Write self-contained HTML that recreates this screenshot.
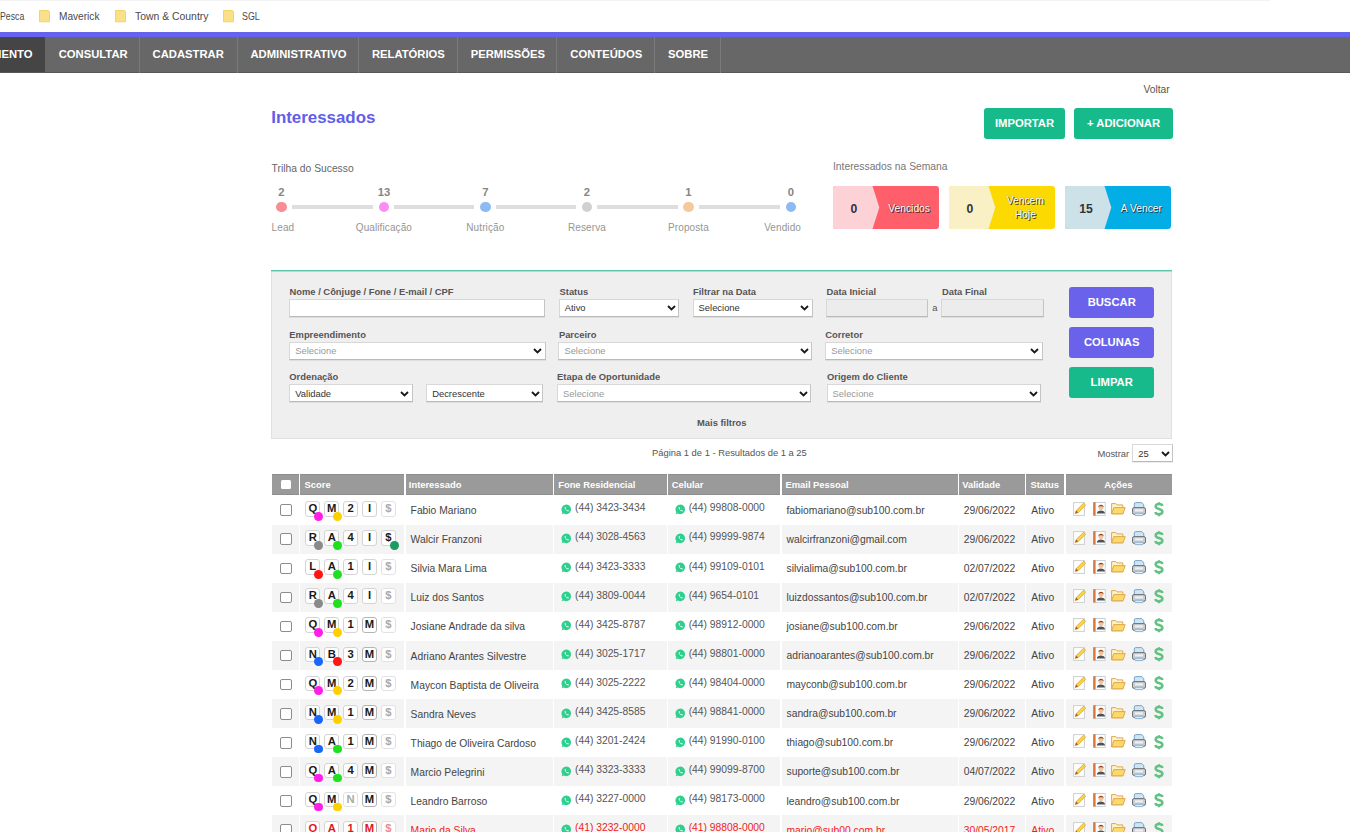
<!DOCTYPE html><html><head><meta charset="utf-8"><style>
html,body{margin:0;padding:0}
body{width:1350px;height:832px;overflow:hidden;position:relative;background:#fff;font-family:'Liberation Sans', sans-serif}
.t{position:absolute;line-height:1;white-space:nowrap}

</style></head><body>
<div style="position:absolute;left:0px;top:0px;width:1270.00px;height:1.00px;background:#f3f3f3"></div>
<div class="t" style="left:0px;top:11.32px;font-size:11.5px;color:#4a4a4a;font-weight:normal;transform:scaleX(0.76);transform-origin:0 0">Pesca</div>
<svg style="position:absolute;left:39px;top:10px" width="12" height="13" viewBox="0 0 12 13"><path d="M0.5 0.5 L9.5 0.5 L10.5 1.5 L10.5 11.8 L0.5 11.8 Z" fill="#fbe08a" stroke="#f0cc5a" stroke-width="0.8"/></svg>
<div class="t" style="left:59px;top:11.32px;font-size:11.5px;color:#4a4a4a;font-weight:normal;transform:scaleX(0.88);transform-origin:0 0">Maverick</div>
<svg style="position:absolute;left:114.5px;top:10px" width="12" height="13" viewBox="0 0 12 13"><path d="M0.5 0.5 L9.5 0.5 L10.5 1.5 L10.5 11.8 L0.5 11.8 Z" fill="#fbe08a" stroke="#f0cc5a" stroke-width="0.8"/></svg>
<div class="t" style="left:134.5px;top:11.32px;font-size:11.5px;color:#4a4a4a;font-weight:normal;transform:scaleX(0.905);transform-origin:0 0">Town &amp; Country</div>
<svg style="position:absolute;left:222.5px;top:10px" width="12" height="13" viewBox="0 0 12 13"><path d="M0.5 0.5 L9.5 0.5 L10.5 1.5 L10.5 11.8 L0.5 11.8 Z" fill="#fbe08a" stroke="#f0cc5a" stroke-width="0.8"/></svg>
<div class="t" style="left:241.5px;top:11.32px;font-size:11.5px;color:#4a4a4a;font-weight:normal;transform:scaleX(0.77);transform-origin:0 0">SGL</div>
<div style="position:absolute;left:0px;top:32px;width:1350.00px;height:5.00px;background:#6662f0"></div>
<div style="position:absolute;left:0px;top:37px;width:1350.00px;height:36.00px;background:#676767"></div>
<div style="position:absolute;left:0px;top:37px;width:45.00px;height:36.00px;background:#454545"></div>
<div style="position:absolute;left:0px;top:72px;width:1350.00px;height:1.00px;background:#585858"></div>
<div style="position:absolute;left:139.0px;top:37px;width:1.00px;height:36.00px;background:#7a7a7a"></div>
<div style="position:absolute;left:237.0px;top:37px;width:1.00px;height:36.00px;background:#7a7a7a"></div>
<div style="position:absolute;left:357.9px;top:37px;width:1.00px;height:36.00px;background:#7a7a7a"></div>
<div style="position:absolute;left:457.4px;top:37px;width:1.00px;height:36.00px;background:#7a7a7a"></div>
<div style="position:absolute;left:556.3px;top:37px;width:1.00px;height:36.00px;background:#7a7a7a"></div>
<div style="position:absolute;left:654.3px;top:37px;width:1.00px;height:36.00px;background:#7a7a7a"></div>
<div style="position:absolute;left:720.2px;top:37px;width:1.00px;height:36.00px;background:#7a7a7a"></div>
<div class="t" style="right:1317.5px;top:49.34px;font-size:11.25px;color:#fff;font-weight:bold;">ATENDIMENTO</div>
<div class="t" style="left:58.7px;top:49.34px;font-size:11.25px;color:#fff;font-weight:bold;">CONSULTAR</div>
<div class="t" style="left:152.6px;top:49.34px;font-size:11.25px;color:#fff;font-weight:bold;">CADASTRAR</div>
<div class="t" style="left:250.4px;top:49.34px;font-size:11.25px;color:#fff;font-weight:bold;">ADMINISTRATIVO</div>
<div class="t" style="left:371.9px;top:49.34px;font-size:11.25px;color:#fff;font-weight:bold;">RELATÓRIOS</div>
<div class="t" style="left:470.7px;top:49.34px;font-size:11.25px;color:#fff;font-weight:bold;">PERMISSÕES</div>
<div class="t" style="left:570.3px;top:49.34px;font-size:11.25px;color:#fff;font-weight:bold;">CONTEÚDOS</div>
<div class="t" style="left:668.0px;top:49.34px;font-size:11.25px;color:#fff;font-weight:bold;">SOBRE</div>
<div class="t" style="left:1143.4px;top:85.15px;font-size:10.3px;color:#555;font-weight:normal;">Voltar</div>
<div class="t" style="left:271.2px;top:109.74px;font-size:16.9px;color:#5f5fe8;font-weight:bold;">Interessados</div>
<div style="position:absolute;left:984px;top:108px;width:81.00px;height:31.00px;background:#17bb8b;border-radius:3px;color:#fff;font-weight:bold;font-size:11.25px;line-height:31.00px;text-align:center;white-space:nowrap">IMPORTAR</div>
<div style="position:absolute;left:1074px;top:108px;width:99.00px;height:31.00px;background:#17bb8b;border-radius:3px;color:#fff;font-weight:bold;font-size:11.25px;line-height:31.00px;text-align:center;white-space:nowrap">+ ADICIONAR</div>
<div class="t" style="left:271.6px;top:163.94px;font-size:10.3px;color:#666;font-weight:normal;">Trilha do Sucesso</div>
<div style="position:absolute;left:276.10px;top:201.50px;width:10.6px;height:10.6px;border-radius:50%;background:#f88d96"></div>
<div class="t" style="left:81.39999999999998px;width:400px;text-align:center;top:186.74px;font-size:11.25px;color:#858585;font-weight:bold;">2</div>
<div class="t" style="left:271.6px;top:223.40px;font-size:10px;color:#959595;font-weight:normal;letter-spacing:0.1px">Lead</div>
<div style="position:absolute;left:291.59999999999997px;top:205px;width:81.50px;height:3.60px;background:#dedede"></div>
<div style="position:absolute;left:378.60px;top:201.50px;width:10.6px;height:10.6px;border-radius:50%;background:#fb8df0"></div>
<div class="t" style="left:183.89999999999998px;width:400px;text-align:center;top:186.74px;font-size:11.25px;color:#858585;font-weight:bold;">13</div>
<div class="t" style="left:183.89999999999998px;width:400px;text-align:center;top:223.40px;font-size:10px;color:#959595;font-weight:normal;letter-spacing:0.1px">Qualificação</div>
<div style="position:absolute;left:394.09999999999997px;top:205px;width:80.40px;height:3.60px;background:#dedede"></div>
<div style="position:absolute;left:480.00px;top:201.50px;width:10.6px;height:10.6px;border-radius:50%;background:#8bbaf4"></div>
<div class="t" style="left:285.3px;width:400px;text-align:center;top:186.74px;font-size:11.25px;color:#858585;font-weight:bold;">7</div>
<div class="t" style="left:285.3px;width:400px;text-align:center;top:223.40px;font-size:10px;color:#959595;font-weight:normal;letter-spacing:0.1px">Nutrição</div>
<div style="position:absolute;left:495.5px;top:205px;width:80.70px;height:3.60px;background:#dedede"></div>
<div style="position:absolute;left:581.70px;top:201.50px;width:10.6px;height:10.6px;border-radius:50%;background:#d0d0d0"></div>
<div class="t" style="left:387px;width:400px;text-align:center;top:186.74px;font-size:11.25px;color:#858585;font-weight:bold;">2</div>
<div class="t" style="left:387px;width:400px;text-align:center;top:223.40px;font-size:10px;color:#959595;font-weight:normal;letter-spacing:0.1px">Reserva</div>
<div style="position:absolute;left:597.2px;top:205px;width:80.50px;height:3.60px;background:#dedede"></div>
<div style="position:absolute;left:683.20px;top:201.50px;width:10.6px;height:10.6px;border-radius:50%;background:#f6c99c"></div>
<div class="t" style="left:488.5px;width:400px;text-align:center;top:186.74px;font-size:11.25px;color:#858585;font-weight:bold;">1</div>
<div class="t" style="left:488.5px;width:400px;text-align:center;top:223.40px;font-size:10px;color:#959595;font-weight:normal;letter-spacing:0.1px">Proposta</div>
<div style="position:absolute;left:698.7px;top:205px;width:81.50px;height:3.60px;background:#dedede"></div>
<div style="position:absolute;left:785.70px;top:201.50px;width:10.6px;height:10.6px;border-radius:50%;background:#8bbaf4"></div>
<div class="t" style="left:591px;width:400px;text-align:center;top:186.74px;font-size:11.25px;color:#858585;font-weight:bold;">0</div>
<div class="t" style="right:549px;top:223.40px;font-size:10px;color:#959595;font-weight:normal;letter-spacing:0.1px">Vendido</div>
<div class="t" style="left:833px;top:162.14px;font-size:10.3px;color:#777;font-weight:normal;">Interessados na Semana</div>
<div style="position:absolute;left:833px;top:186px;width:106.2px;height:43px;border-radius:3px;overflow:hidden;background:#ff5e6b"><svg style="position:absolute;left:0;top:0" width="50" height="43"><path d="M0 0 L39.5 0 L46.3 21.5 L39.5 43 L0 43 Z" fill="#fdd2d6"/></svg><div style="position:absolute;left:0.8px;width:40px;top:2px;height:43px;line-height:43px;text-align:center;font-size:12.2px;font-weight:bold;color:#333">0</div><div style="position:absolute;left:46px;right:0;top:1.3px;line-height:43px;text-align:center;font-size:10.3px;color:#fff;text-shadow:1px 1px 0.6px rgba(30,30,30,0.85), 0 0 1px rgba(40,40,40,0.5)">Vencidos</div></div>
<div style="position:absolute;left:949.2px;top:186px;width:106.2px;height:43px;border-radius:3px;overflow:hidden;background:#fcd900"><svg style="position:absolute;left:0;top:0" width="50" height="43"><path d="M0 0 L39.5 0 L46.3 21.5 L39.5 43 L0 43 Z" fill="#faf0c6"/></svg><div style="position:absolute;left:0.8px;width:40px;top:2px;height:43px;line-height:43px;text-align:center;font-size:12.2px;font-weight:bold;color:#333">0</div><div style="position:absolute;left:46px;right:0;top:8.4px;line-height:14.0px;text-align:center;font-size:10.3px;color:#fff;text-shadow:1px 1px 0.6px rgba(30,30,30,0.85), 0 0 1px rgba(40,40,40,0.5)">Vencem<br>Hoje</div></div>
<div style="position:absolute;left:1065.3px;top:186px;width:106.2px;height:43px;border-radius:3px;overflow:hidden;background:#03ade6"><svg style="position:absolute;left:0;top:0" width="50" height="43"><path d="M0 0 L39.5 0 L46.3 21.5 L39.5 43 L0 43 Z" fill="#cde2e8"/></svg><div style="position:absolute;left:0.8px;width:40px;top:2px;height:43px;line-height:43px;text-align:center;font-size:12.2px;font-weight:bold;color:#333">15</div><div style="position:absolute;left:46px;right:0;top:1.3px;line-height:43px;text-align:center;font-size:10.3px;color:#fff;text-shadow:1px 1px 0.6px rgba(30,30,30,0.85), 0 0 1px rgba(40,40,40,0.5)">A Vencer</div></div>
<div style="position:absolute;left:271px;top:270px;width:898.5px;height:166px;background:#efefef;border:1px solid #e0e0e0;border-top:2px solid #5dd5b6"></div>
<div style="position:absolute;left:271px;top:270px;width:901.00px;height:1.00px;background:#5cc6ac"></div>
<div style="position:absolute;left:271px;top:271px;width:901.00px;height:1.00px;background:#9fe6d2"></div>
<div class="t" style="left:289.5px;top:286.81px;font-size:9.4px;color:#555;font-weight:bold;">Nome / Cônjuge / Fone / E-mail / CPF</div>
<div class="t" style="left:559.5px;top:286.81px;font-size:9.4px;color:#555;font-weight:bold;">Status</div>
<div class="t" style="left:693px;top:286.81px;font-size:9.4px;color:#555;font-weight:bold;">Filtrar na Data</div>
<div class="t" style="left:826.5px;top:286.81px;font-size:9.4px;color:#555;font-weight:bold;">Data Inicial</div>
<div class="t" style="left:942px;top:286.81px;font-size:9.4px;color:#555;font-weight:bold;">Data Final</div>
<div style="position:absolute;left:289.2px;top:298.7px;width:253.60px;height:16.00px;background:#fff;border:1px solid #d8d8d8;border-bottom-color:#b9b9b9;border-right-color:#c4c4c4;box-shadow:0 1px 0 rgba(0,0,0,0.07)"></div>
<div style="position:absolute;left:558.7px;top:298.7px;width:118.60px;height:16.00px;background:#fff;border:1px solid #d8d8d8;border-bottom-color:#b9b9b9;border-right-color:#c4c4c4;box-shadow:0 1px 0 rgba(0,0,0,0.07)"></div>
<div class="t" style="left:564.7px;top:303.11px;font-size:9.4px;color:#333;font-weight:normal;">Ativo</div>
<svg style="position:absolute;left:666.8px;top:305.3px" width="9" height="6" viewBox="0 0 9 6"><path d="M1 1 L4.5 4.5 L8 1" fill="none" stroke="#1a1a1a" stroke-width="1.85"/></svg>
<div style="position:absolute;left:692.6px;top:298.7px;width:118.00px;height:16.00px;background:#fff;border:1px solid #d8d8d8;border-bottom-color:#b9b9b9;border-right-color:#c4c4c4;box-shadow:0 1px 0 rgba(0,0,0,0.07)"></div>
<div class="t" style="left:698.6px;top:303.11px;font-size:9.4px;color:#333;font-weight:normal;">Selecione</div>
<svg style="position:absolute;left:800.1px;top:305.3px" width="9" height="6" viewBox="0 0 9 6"><path d="M1 1 L4.5 4.5 L8 1" fill="none" stroke="#1a1a1a" stroke-width="1.85"/></svg>
<div style="position:absolute;left:826px;top:298.7px;width:100.30px;height:16.00px;background:#ececec;border:1px solid #d8d8d8;border-bottom-color:#b9b9b9;border-right-color:#c4c4c4;box-shadow:0 1px 0 rgba(0,0,0,0.07)"></div>
<div class="t" style="left:932.3px;top:302.51px;font-size:9.4px;color:#555;font-weight:normal;">a</div>
<div style="position:absolute;left:941.4px;top:298.7px;width:100.50px;height:16.00px;background:#ececec;border:1px solid #d8d8d8;border-bottom-color:#b9b9b9;border-right-color:#c4c4c4;box-shadow:0 1px 0 rgba(0,0,0,0.07)"></div>
<div class="t" style="left:289.3px;top:329.81px;font-size:9.4px;color:#555;font-weight:bold;">Empreendimento</div>
<div class="t" style="left:558.9px;top:329.81px;font-size:9.4px;color:#555;font-weight:bold;">Parceiro</div>
<div class="t" style="left:825.3px;top:329.81px;font-size:9.4px;color:#555;font-weight:bold;">Corretor</div>
<div style="position:absolute;left:289.3px;top:341.6px;width:254.30px;height:16.00px;background:#fff;border:1px solid #d8d8d8;border-bottom-color:#b9b9b9;border-right-color:#c4c4c4;box-shadow:0 1px 0 rgba(0,0,0,0.07)"></div>
<div class="t" style="left:295.3px;top:346.01px;font-size:9.4px;color:#999;font-weight:normal;">Selecione</div>
<svg style="position:absolute;left:533.1px;top:348.20000000000005px" width="9" height="6" viewBox="0 0 9 6"><path d="M1 1 L4.5 4.5 L8 1" fill="none" stroke="#1a1a1a" stroke-width="1.85"/></svg>
<div style="position:absolute;left:558.4px;top:341.6px;width:251.80px;height:16.00px;background:#fff;border:1px solid #d8d8d8;border-bottom-color:#b9b9b9;border-right-color:#c4c4c4;box-shadow:0 1px 0 rgba(0,0,0,0.07)"></div>
<div class="t" style="left:564.4px;top:346.01px;font-size:9.4px;color:#999;font-weight:normal;">Selecione</div>
<svg style="position:absolute;left:799.7px;top:348.20000000000005px" width="9" height="6" viewBox="0 0 9 6"><path d="M1 1 L4.5 4.5 L8 1" fill="none" stroke="#1a1a1a" stroke-width="1.85"/></svg>
<div style="position:absolute;left:825.3px;top:341.6px;width:215.30px;height:16.00px;background:#fff;border:1px solid #d8d8d8;border-bottom-color:#b9b9b9;border-right-color:#c4c4c4;box-shadow:0 1px 0 rgba(0,0,0,0.07)"></div>
<div class="t" style="left:831.3px;top:346.01px;font-size:9.4px;color:#999;font-weight:normal;">Selecione</div>
<svg style="position:absolute;left:1030.1px;top:348.20000000000005px" width="9" height="6" viewBox="0 0 9 6"><path d="M1 1 L4.5 4.5 L8 1" fill="none" stroke="#1a1a1a" stroke-width="1.85"/></svg>
<div class="t" style="left:289.3px;top:372.41px;font-size:9.4px;color:#555;font-weight:bold;">Ordenação</div>
<div class="t" style="left:557.1px;top:372.41px;font-size:9.4px;color:#555;font-weight:bold;">Etapa de Oportunidade</div>
<div class="t" style="left:827px;top:372.41px;font-size:9.4px;color:#555;font-weight:bold;">Origem do Cliente</div>
<div style="position:absolute;left:289.3px;top:384.4px;width:121.40px;height:15.80px;background:#fff;border:1px solid #d8d8d8;border-bottom-color:#b9b9b9;border-right-color:#c4c4c4;box-shadow:0 1px 0 rgba(0,0,0,0.07)"></div>
<div class="t" style="left:295.3px;top:388.71px;font-size:9.4px;color:#333;font-weight:normal;">Validade</div>
<svg style="position:absolute;left:400.2px;top:390.9px" width="9" height="6" viewBox="0 0 9 6"><path d="M1 1 L4.5 4.5 L8 1" fill="none" stroke="#1a1a1a" stroke-width="1.85"/></svg>
<div style="position:absolute;left:426.2px;top:384.4px;width:115.10px;height:15.80px;background:#fff;border:1px solid #d8d8d8;border-bottom-color:#b9b9b9;border-right-color:#c4c4c4;box-shadow:0 1px 0 rgba(0,0,0,0.07)"></div>
<div class="t" style="left:432.2px;top:388.71px;font-size:9.4px;color:#333;font-weight:normal;">Decrescente</div>
<svg style="position:absolute;left:530.8px;top:390.9px" width="9" height="6" viewBox="0 0 9 6"><path d="M1 1 L4.5 4.5 L8 1" fill="none" stroke="#1a1a1a" stroke-width="1.85"/></svg>
<div style="position:absolute;left:557.1px;top:384.4px;width:252.00px;height:15.80px;background:#fff;border:1px solid #d8d8d8;border-bottom-color:#b9b9b9;border-right-color:#c4c4c4;box-shadow:0 1px 0 rgba(0,0,0,0.07)"></div>
<div class="t" style="left:563.1px;top:388.71px;font-size:9.4px;color:#999;font-weight:normal;">Selecione</div>
<svg style="position:absolute;left:798.6px;top:390.9px" width="9" height="6" viewBox="0 0 9 6"><path d="M1 1 L4.5 4.5 L8 1" fill="none" stroke="#1a1a1a" stroke-width="1.85"/></svg>
<div style="position:absolute;left:826.6px;top:384.4px;width:212.90px;height:15.80px;background:#fff;border:1px solid #d8d8d8;border-bottom-color:#b9b9b9;border-right-color:#c4c4c4;box-shadow:0 1px 0 rgba(0,0,0,0.07)"></div>
<div class="t" style="left:832.6px;top:388.71px;font-size:9.4px;color:#999;font-weight:normal;">Selecione</div>
<svg style="position:absolute;left:1029.0px;top:390.9px" width="9" height="6" viewBox="0 0 9 6"><path d="M1 1 L4.5 4.5 L8 1" fill="none" stroke="#1a1a1a" stroke-width="1.85"/></svg>
<div class="t" style="left:697px;top:418.21px;font-size:9.4px;color:#555;font-weight:bold;">Mais filtros</div>
<div style="position:absolute;left:1069px;top:286.5px;width:85.40px;height:31.10px;background:#6a62ea;border-radius:3px;color:#fff;font-weight:bold;font-size:11.25px;line-height:31.10px;text-align:center;white-space:nowrap">BUSCAR</div>
<div style="position:absolute;left:1069px;top:327px;width:85.40px;height:31.00px;background:#6a62ea;border-radius:3px;color:#fff;font-weight:bold;font-size:11.25px;line-height:31.00px;text-align:center;white-space:nowrap">COLUNAS</div>
<div style="position:absolute;left:1069px;top:367px;width:85.40px;height:31.30px;background:#17bb8b;border-radius:3px;color:#fff;font-weight:bold;font-size:11.25px;line-height:31.30px;text-align:center;white-space:nowrap">LIMPAR</div>
<div class="t" style="left:652px;top:448.41px;font-size:9.4px;color:#555;font-weight:normal;">Página 1 de 1 - Resultados de 1 a 25</div>
<div class="t" style="left:1097.4px;top:448.51px;font-size:9.4px;color:#555;font-weight:normal;">Mostrar</div>
<div style="position:absolute;left:1132.3px;top:444.2px;width:39.00px;height:16.00px;background:#fff;border:1px solid #d8d8d8;border-bottom-color:#b9b9b9;border-right-color:#c4c4c4;box-shadow:0 1px 0 rgba(0,0,0,0.07)"></div>
<div class="t" style="left:1138.3px;top:448.61px;font-size:9.4px;color:#333;font-weight:normal;">25</div>
<svg style="position:absolute;left:1160.8px;top:450.8px" width="9" height="6" viewBox="0 0 9 6"><path d="M1 1 L4.5 4.5 L8 1" fill="none" stroke="#1a1a1a" stroke-width="1.85"/></svg>
<div style="position:absolute;left:272px;top:474px;width:900.00px;height:21.00px;background:#9a9a9a;border-top:1px solid #8e8e8e;border-bottom:1px solid #8e8e8e;box-sizing:border-box"></div>
<div style="position:absolute;left:272px;top:524.6800000000001px;width:900.00px;height:29.08px;background:#f4f4f4"></div>
<div style="position:absolute;left:272px;top:582.84px;width:900.00px;height:29.08px;background:#f4f4f4"></div>
<div style="position:absolute;left:272px;top:641.0px;width:900.00px;height:29.08px;background:#f4f4f4"></div>
<div style="position:absolute;left:272px;top:699.1600000000001px;width:900.00px;height:29.08px;background:#f4f4f4"></div>
<div style="position:absolute;left:272px;top:757.3199999999999px;width:900.00px;height:29.08px;background:#f4f4f4"></div>
<div style="position:absolute;left:272px;top:815.48px;width:900.00px;height:16.52px;background:#f4f4f4"></div>
<div style="position:absolute;left:298.8px;top:474px;width:1.70px;height:358.00px;background:#fff"></div>
<div style="position:absolute;left:404.3px;top:474px;width:1.30px;height:358.00px;background:#fff"></div>
<div style="position:absolute;left:553.2px;top:474px;width:1.30px;height:358.00px;background:#fff"></div>
<div style="position:absolute;left:666.5px;top:474px;width:1.30px;height:358.00px;background:#fff"></div>
<div style="position:absolute;left:780.2px;top:474px;width:1.50px;height:358.00px;background:#fff"></div>
<div style="position:absolute;left:957.8px;top:474px;width:1.20px;height:358.00px;background:#fff"></div>
<div style="position:absolute;left:1025.1px;top:474px;width:1.40px;height:358.00px;background:#fff"></div>
<div style="position:absolute;left:1064.4px;top:474px;width:1.60px;height:358.00px;background:#fff"></div>
<div class="t" style="left:304.6px;top:480.31px;font-size:9.4px;color:#fff;font-weight:bold;">Score</div>
<div class="t" style="left:408.8px;top:480.31px;font-size:9.4px;color:#fff;font-weight:bold;">Interessado</div>
<div class="t" style="left:558.2px;top:480.31px;font-size:9.4px;color:#fff;font-weight:bold;">Fone Residencial</div>
<div class="t" style="left:671.7px;top:480.31px;font-size:9.4px;color:#fff;font-weight:bold;">Celular</div>
<div class="t" style="left:785.5px;top:480.31px;font-size:9.4px;color:#fff;font-weight:bold;">Email Pessoal</div>
<div class="t" style="left:962.2px;top:480.31px;font-size:9.4px;color:#fff;font-weight:bold;">Validade</div>
<div class="t" style="left:1030.4px;top:480.31px;font-size:9.4px;color:#fff;font-weight:bold;">Status</div>
<div class="t" style="left:918.4000000000001px;width:400px;text-align:center;top:480.31px;font-size:9.4px;color:#fff;font-weight:bold;">Ações</div>
<div style="position:absolute;left:281px;top:479.8px;width:10.00px;height:9.40px;background:#fff;border-radius:1.5px"></div>
<div style="position:absolute;left:280.3px;top:504.40px;width:9.6px;height:9.6px;border:1.2px solid #8c8c8c;border-radius:2px;background:#fff"></div>
<div style="position:absolute;left:305.20px;top:501.10px;width:13.2px;height:13.6px;border:1px solid #d4d4d4;border-radius:3px;background:#fff;text-align:center;font-size:11.25px;line-height:12.6px;font-weight:bold;color:#1a1a1a">Q</div>
<div style="position:absolute;left:314.40px;top:511.90px;width:8.8px;height:8.8px;border-radius:50%;background:#ff1ee8"></div>
<div style="position:absolute;left:324.10px;top:501.10px;width:13.2px;height:13.6px;border:1px solid #d4d4d4;border-radius:3px;background:#fff;text-align:center;font-size:11.25px;line-height:12.6px;font-weight:bold;color:#1a1a1a">M</div>
<div style="position:absolute;left:333.30px;top:511.90px;width:8.8px;height:8.8px;border-radius:50%;background:#ffd000"></div>
<div style="position:absolute;left:343.00px;top:501.10px;width:13.2px;height:13.6px;border:1px solid #d4d4d4;border-radius:3px;background:#fff;text-align:center;font-size:11.25px;line-height:12.6px;font-weight:bold;color:#1a1a1a">2</div>
<div style="position:absolute;left:361.90px;top:501.10px;width:13.2px;height:13.6px;border:1px solid #d4d4d4;border-radius:3px;background:#fff;text-align:center;font-size:11.25px;line-height:12.6px;font-weight:bold;color:#1a1a1a">I</div>
<div style="position:absolute;left:380.80px;top:501.10px;width:13.2px;height:13.6px;border:1px solid #e2e2e2;border-radius:3px;background:#fff;text-align:center;font-size:11.25px;line-height:12.6px;font-weight:bold;color:#aaa">$</div>
<div class="t" style="left:410.6px;top:506.15px;font-size:10.3px;color:#444;font-weight:normal;">Fabio Mariano</div>
<svg style="position:absolute;left:561.00px;top:504.00px" width="11" height="11" viewBox="0 0 11 11"><path d="M5.5 0.6 A4.8 4.8 0 1 1 2.9 9.6 L0.7 10.3 L1.4 8.2 A4.8 4.8 0 0 1 5.5 0.6 Z" fill="#2fcf8e"/><path d="M3.6 3.2 C3.4 4.6 5.3 7.2 7.4 7.4 L7.9 6.7 L6.8 6.1 L6.3 6.6 C5.6 6.3 4.8 5.5 4.5 4.8 L5 4.3 L4.4 3.1 Z" fill="#fff"/></svg>
<div class="t" style="left:575px;top:503.35px;font-size:10.3px;color:#555;font-weight:normal;">(44) 3423-3434</div>
<svg style="position:absolute;left:674.60px;top:504.00px" width="11" height="11" viewBox="0 0 11 11"><path d="M5.5 0.6 A4.8 4.8 0 1 1 2.9 9.6 L0.7 10.3 L1.4 8.2 A4.8 4.8 0 0 1 5.5 0.6 Z" fill="#2fcf8e"/><path d="M3.6 3.2 C3.4 4.6 5.3 7.2 7.4 7.4 L7.9 6.7 L6.8 6.1 L6.3 6.6 C5.6 6.3 4.8 5.5 4.5 4.8 L5 4.3 L4.4 3.1 Z" fill="#fff"/></svg>
<div class="t" style="left:688.7px;top:503.35px;font-size:10.3px;color:#555;font-weight:normal;">(44) 99808-0000</div>
<div class="t" style="left:786.5px;top:505.75px;font-size:10.3px;color:#444;font-weight:normal;">fabiomariano@sub100.com.br</div>
<div class="t" style="left:963.7px;top:505.75px;font-size:10.3px;color:#444;font-weight:normal;">29/06/2022</div>
<div class="t" style="left:1031.3px;top:505.75px;font-size:10.3px;color:#444;font-weight:normal;">Ativo</div>
<svg style="position:absolute;left:1073px;top:501.70px" width="15" height="15" viewBox="0 0 15 15"><rect x="0.6" y="0.6" width="10.8" height="12.8" fill="#fff" stroke="#cfcfcf" stroke-width="1"/><path d="M2.2 11.6 L3.2 8.6 L10.6 1.2 L12.6 3.2 L5.2 10.6 Z" fill="#f9d648" stroke="#dca32a" stroke-width="0.8"/><path d="M2.2 11.6 L3.2 8.6 L5.2 10.6 Z" fill="#a8582c"/></svg>
<svg style="position:absolute;left:1093.2px;top:501.70px" width="13" height="15" viewBox="0 0 13 15"><rect x="1" y="0.5" width="11.2" height="12.9" fill="#fff" stroke="#c3cdd6" stroke-width="0.9"/><rect x="0.2" y="0.2" width="2.4" height="13.4" fill="#d9773c"/><path d="M3.8 11.6 C3.6 7.4 12.2 7.4 12 11.6 Z" fill="#4f5358"/><circle cx="8" cy="5.4" r="2.5" fill="#efc39a"/><path d="M5.3 5.3 C5 1.9 11 1.9 10.7 5.3 C10 4 6 4 5.3 5.3 Z" fill="#9c4418"/></svg>
<svg style="position:absolute;left:1111px;top:503.20px" width="15" height="12" viewBox="0 0 15 12"><path d="M0.6 0.6 L4.8 0.6 L6 1.9 L11.8 1.9 L11.8 10.8 L0.6 10.8 Z" fill="#fdf2c8" stroke="#e0a850" stroke-width="1"/><path d="M2.8 4.6 L14.2 4.6 L12 10.8 L0.6 10.8 Z" fill="#fbd96a" stroke="#e0a850" stroke-width="1"/></svg>
<svg style="position:absolute;left:1132px;top:501.70px" width="15" height="15" viewBox="0 0 15 15"><path d="M2.3 6.5 L2.3 2 Q2.3 0.6 3.7 0.6 L9.8 0.6 L11.8 2.8 L11.8 6.5 Z" fill="#cde6f6" stroke="#6f9cbf" stroke-width="0.9"/><rect x="0.5" y="5.6" width="13" height="6.8" rx="1.6" fill="#c9cdd0" stroke="#5d6368" stroke-width="0.9"/><rect x="3" y="7.3" width="8" height="2.2" fill="#eef0f2"/><rect x="2.8" y="11.2" width="8.4" height="2.4" rx="0.6" fill="#dcecf7" stroke="#7aa2c2" stroke-width="0.8"/></svg>
<svg style="position:absolute;left:1153.5px;top:501.90px" width="10" height="15" viewBox="0 0 10 15"><path d="M8.4 4 C8.1 2.6 6.9 2.1 5 2.1 C3 2.1 1.7 3 1.7 4.4 C1.7 6 3.2 6.5 5 7 C6.9 7.5 8.4 8 8.4 9.8 C8.4 11.3 7 12.2 5 12.2 C3 12.2 1.7 11.5 1.4 10" fill="none" stroke="#63c283" stroke-width="2.5"/><path d="M5 0.2 L5 2.6 M5 11.8 L5 14.2" stroke="#63c283" stroke-width="2.2"/></svg>
<div style="position:absolute;left:280.3px;top:533.48px;width:9.6px;height:9.6px;border:1.2px solid #8c8c8c;border-radius:2px;background:#fff"></div>
<div style="position:absolute;left:305.20px;top:530.18px;width:13.2px;height:13.6px;border:1px solid #d4d4d4;border-radius:3px;background:#fff;text-align:center;font-size:11.25px;line-height:12.6px;font-weight:bold;color:#1a1a1a">R</div>
<div style="position:absolute;left:314.40px;top:540.98px;width:8.8px;height:8.8px;border-radius:50%;background:#8a8a8a"></div>
<div style="position:absolute;left:324.10px;top:530.18px;width:13.2px;height:13.6px;border:1px solid #d4d4d4;border-radius:3px;background:#fff;text-align:center;font-size:11.25px;line-height:12.6px;font-weight:bold;color:#1a1a1a">A</div>
<div style="position:absolute;left:333.30px;top:540.98px;width:8.8px;height:8.8px;border-radius:50%;background:#1ee01e"></div>
<div style="position:absolute;left:343.00px;top:530.18px;width:13.2px;height:13.6px;border:1px solid #d4d4d4;border-radius:3px;background:#fff;text-align:center;font-size:11.25px;line-height:12.6px;font-weight:bold;color:#1a1a1a">4</div>
<div style="position:absolute;left:361.90px;top:530.18px;width:13.2px;height:13.6px;border:1px solid #d4d4d4;border-radius:3px;background:#fff;text-align:center;font-size:11.25px;line-height:12.6px;font-weight:bold;color:#1a1a1a">I</div>
<div style="position:absolute;left:380.80px;top:530.18px;width:13.2px;height:13.6px;border:1px solid #d4d4d4;border-radius:3px;background:#fff;text-align:center;font-size:11.25px;line-height:12.6px;font-weight:bold;color:#1a1a1a">$</div>
<div style="position:absolute;left:390.00px;top:540.98px;width:8.8px;height:8.8px;border-radius:50%;background:#1e9a62"></div>
<div class="t" style="left:410.6px;top:535.23px;font-size:10.3px;color:#444;font-weight:normal;">Walcir Franzoni</div>
<svg style="position:absolute;left:561.00px;top:533.08px" width="11" height="11" viewBox="0 0 11 11"><path d="M5.5 0.6 A4.8 4.8 0 1 1 2.9 9.6 L0.7 10.3 L1.4 8.2 A4.8 4.8 0 0 1 5.5 0.6 Z" fill="#2fcf8e"/><path d="M3.6 3.2 C3.4 4.6 5.3 7.2 7.4 7.4 L7.9 6.7 L6.8 6.1 L6.3 6.6 C5.6 6.3 4.8 5.5 4.5 4.8 L5 4.3 L4.4 3.1 Z" fill="#fff"/></svg>
<div class="t" style="left:575px;top:532.43px;font-size:10.3px;color:#555;font-weight:normal;">(44) 3028-4563</div>
<svg style="position:absolute;left:674.60px;top:533.08px" width="11" height="11" viewBox="0 0 11 11"><path d="M5.5 0.6 A4.8 4.8 0 1 1 2.9 9.6 L0.7 10.3 L1.4 8.2 A4.8 4.8 0 0 1 5.5 0.6 Z" fill="#2fcf8e"/><path d="M3.6 3.2 C3.4 4.6 5.3 7.2 7.4 7.4 L7.9 6.7 L6.8 6.1 L6.3 6.6 C5.6 6.3 4.8 5.5 4.5 4.8 L5 4.3 L4.4 3.1 Z" fill="#fff"/></svg>
<div class="t" style="left:688.7px;top:532.43px;font-size:10.3px;color:#555;font-weight:normal;">(44) 99999-9874</div>
<div class="t" style="left:786.5px;top:534.83px;font-size:10.3px;color:#444;font-weight:normal;">walcirfranzoni@gmail.com</div>
<div class="t" style="left:963.7px;top:534.83px;font-size:10.3px;color:#444;font-weight:normal;">29/06/2022</div>
<div class="t" style="left:1031.3px;top:534.83px;font-size:10.3px;color:#444;font-weight:normal;">Ativo</div>
<svg style="position:absolute;left:1073px;top:530.78px" width="15" height="15" viewBox="0 0 15 15"><rect x="0.6" y="0.6" width="10.8" height="12.8" fill="#fff" stroke="#cfcfcf" stroke-width="1"/><path d="M2.2 11.6 L3.2 8.6 L10.6 1.2 L12.6 3.2 L5.2 10.6 Z" fill="#f9d648" stroke="#dca32a" stroke-width="0.8"/><path d="M2.2 11.6 L3.2 8.6 L5.2 10.6 Z" fill="#a8582c"/></svg>
<svg style="position:absolute;left:1093.2px;top:530.78px" width="13" height="15" viewBox="0 0 13 15"><rect x="1" y="0.5" width="11.2" height="12.9" fill="#fff" stroke="#c3cdd6" stroke-width="0.9"/><rect x="0.2" y="0.2" width="2.4" height="13.4" fill="#d9773c"/><path d="M3.8 11.6 C3.6 7.4 12.2 7.4 12 11.6 Z" fill="#4f5358"/><circle cx="8" cy="5.4" r="2.5" fill="#efc39a"/><path d="M5.3 5.3 C5 1.9 11 1.9 10.7 5.3 C10 4 6 4 5.3 5.3 Z" fill="#9c4418"/></svg>
<svg style="position:absolute;left:1111px;top:532.28px" width="15" height="12" viewBox="0 0 15 12"><path d="M0.6 0.6 L4.8 0.6 L6 1.9 L11.8 1.9 L11.8 10.8 L0.6 10.8 Z" fill="#fdf2c8" stroke="#e0a850" stroke-width="1"/><path d="M2.8 4.6 L14.2 4.6 L12 10.8 L0.6 10.8 Z" fill="#fbd96a" stroke="#e0a850" stroke-width="1"/></svg>
<svg style="position:absolute;left:1132px;top:530.78px" width="15" height="15" viewBox="0 0 15 15"><path d="M2.3 6.5 L2.3 2 Q2.3 0.6 3.7 0.6 L9.8 0.6 L11.8 2.8 L11.8 6.5 Z" fill="#cde6f6" stroke="#6f9cbf" stroke-width="0.9"/><rect x="0.5" y="5.6" width="13" height="6.8" rx="1.6" fill="#c9cdd0" stroke="#5d6368" stroke-width="0.9"/><rect x="3" y="7.3" width="8" height="2.2" fill="#eef0f2"/><rect x="2.8" y="11.2" width="8.4" height="2.4" rx="0.6" fill="#dcecf7" stroke="#7aa2c2" stroke-width="0.8"/></svg>
<svg style="position:absolute;left:1153.5px;top:530.98px" width="10" height="15" viewBox="0 0 10 15"><path d="M8.4 4 C8.1 2.6 6.9 2.1 5 2.1 C3 2.1 1.7 3 1.7 4.4 C1.7 6 3.2 6.5 5 7 C6.9 7.5 8.4 8 8.4 9.8 C8.4 11.3 7 12.2 5 12.2 C3 12.2 1.7 11.5 1.4 10" fill="none" stroke="#63c283" stroke-width="2.5"/><path d="M5 0.2 L5 2.6 M5 11.8 L5 14.2" stroke="#63c283" stroke-width="2.2"/></svg>
<div style="position:absolute;left:280.3px;top:562.56px;width:9.6px;height:9.6px;border:1.2px solid #8c8c8c;border-radius:2px;background:#fff"></div>
<div style="position:absolute;left:305.20px;top:559.26px;width:13.2px;height:13.6px;border:1px solid #d4d4d4;border-radius:3px;background:#fff;text-align:center;font-size:11.25px;line-height:12.6px;font-weight:bold;color:#1a1a1a">L</div>
<div style="position:absolute;left:314.40px;top:570.06px;width:8.8px;height:8.8px;border-radius:50%;background:#ff1414"></div>
<div style="position:absolute;left:324.10px;top:559.26px;width:13.2px;height:13.6px;border:1px solid #d4d4d4;border-radius:3px;background:#fff;text-align:center;font-size:11.25px;line-height:12.6px;font-weight:bold;color:#1a1a1a">A</div>
<div style="position:absolute;left:333.30px;top:570.06px;width:8.8px;height:8.8px;border-radius:50%;background:#1ee01e"></div>
<div style="position:absolute;left:343.00px;top:559.26px;width:13.2px;height:13.6px;border:1px solid #d4d4d4;border-radius:3px;background:#fff;text-align:center;font-size:11.25px;line-height:12.6px;font-weight:bold;color:#1a1a1a">1</div>
<div style="position:absolute;left:361.90px;top:559.26px;width:13.2px;height:13.6px;border:1px solid #d4d4d4;border-radius:3px;background:#fff;text-align:center;font-size:11.25px;line-height:12.6px;font-weight:bold;color:#1a1a1a">I</div>
<div style="position:absolute;left:380.80px;top:559.26px;width:13.2px;height:13.6px;border:1px solid #e2e2e2;border-radius:3px;background:#fff;text-align:center;font-size:11.25px;line-height:12.6px;font-weight:bold;color:#aaa">$</div>
<div class="t" style="left:410.6px;top:564.31px;font-size:10.3px;color:#444;font-weight:normal;">Silvia Mara Lima</div>
<svg style="position:absolute;left:561.00px;top:562.16px" width="11" height="11" viewBox="0 0 11 11"><path d="M5.5 0.6 A4.8 4.8 0 1 1 2.9 9.6 L0.7 10.3 L1.4 8.2 A4.8 4.8 0 0 1 5.5 0.6 Z" fill="#2fcf8e"/><path d="M3.6 3.2 C3.4 4.6 5.3 7.2 7.4 7.4 L7.9 6.7 L6.8 6.1 L6.3 6.6 C5.6 6.3 4.8 5.5 4.5 4.8 L5 4.3 L4.4 3.1 Z" fill="#fff"/></svg>
<div class="t" style="left:575px;top:561.50px;font-size:10.3px;color:#555;font-weight:normal;">(44) 3423-3333</div>
<svg style="position:absolute;left:674.60px;top:562.16px" width="11" height="11" viewBox="0 0 11 11"><path d="M5.5 0.6 A4.8 4.8 0 1 1 2.9 9.6 L0.7 10.3 L1.4 8.2 A4.8 4.8 0 0 1 5.5 0.6 Z" fill="#2fcf8e"/><path d="M3.6 3.2 C3.4 4.6 5.3 7.2 7.4 7.4 L7.9 6.7 L6.8 6.1 L6.3 6.6 C5.6 6.3 4.8 5.5 4.5 4.8 L5 4.3 L4.4 3.1 Z" fill="#fff"/></svg>
<div class="t" style="left:688.7px;top:561.50px;font-size:10.3px;color:#555;font-weight:normal;">(44) 99109-0101</div>
<div class="t" style="left:786.5px;top:563.91px;font-size:10.3px;color:#444;font-weight:normal;">silvialima@sub100.com.br</div>
<div class="t" style="left:963.7px;top:563.91px;font-size:10.3px;color:#444;font-weight:normal;">02/07/2022</div>
<div class="t" style="left:1031.3px;top:563.91px;font-size:10.3px;color:#444;font-weight:normal;">Ativo</div>
<svg style="position:absolute;left:1073px;top:559.86px" width="15" height="15" viewBox="0 0 15 15"><rect x="0.6" y="0.6" width="10.8" height="12.8" fill="#fff" stroke="#cfcfcf" stroke-width="1"/><path d="M2.2 11.6 L3.2 8.6 L10.6 1.2 L12.6 3.2 L5.2 10.6 Z" fill="#f9d648" stroke="#dca32a" stroke-width="0.8"/><path d="M2.2 11.6 L3.2 8.6 L5.2 10.6 Z" fill="#a8582c"/></svg>
<svg style="position:absolute;left:1093.2px;top:559.86px" width="13" height="15" viewBox="0 0 13 15"><rect x="1" y="0.5" width="11.2" height="12.9" fill="#fff" stroke="#c3cdd6" stroke-width="0.9"/><rect x="0.2" y="0.2" width="2.4" height="13.4" fill="#d9773c"/><path d="M3.8 11.6 C3.6 7.4 12.2 7.4 12 11.6 Z" fill="#4f5358"/><circle cx="8" cy="5.4" r="2.5" fill="#efc39a"/><path d="M5.3 5.3 C5 1.9 11 1.9 10.7 5.3 C10 4 6 4 5.3 5.3 Z" fill="#9c4418"/></svg>
<svg style="position:absolute;left:1111px;top:561.36px" width="15" height="12" viewBox="0 0 15 12"><path d="M0.6 0.6 L4.8 0.6 L6 1.9 L11.8 1.9 L11.8 10.8 L0.6 10.8 Z" fill="#fdf2c8" stroke="#e0a850" stroke-width="1"/><path d="M2.8 4.6 L14.2 4.6 L12 10.8 L0.6 10.8 Z" fill="#fbd96a" stroke="#e0a850" stroke-width="1"/></svg>
<svg style="position:absolute;left:1132px;top:559.86px" width="15" height="15" viewBox="0 0 15 15"><path d="M2.3 6.5 L2.3 2 Q2.3 0.6 3.7 0.6 L9.8 0.6 L11.8 2.8 L11.8 6.5 Z" fill="#cde6f6" stroke="#6f9cbf" stroke-width="0.9"/><rect x="0.5" y="5.6" width="13" height="6.8" rx="1.6" fill="#c9cdd0" stroke="#5d6368" stroke-width="0.9"/><rect x="3" y="7.3" width="8" height="2.2" fill="#eef0f2"/><rect x="2.8" y="11.2" width="8.4" height="2.4" rx="0.6" fill="#dcecf7" stroke="#7aa2c2" stroke-width="0.8"/></svg>
<svg style="position:absolute;left:1153.5px;top:560.06px" width="10" height="15" viewBox="0 0 10 15"><path d="M8.4 4 C8.1 2.6 6.9 2.1 5 2.1 C3 2.1 1.7 3 1.7 4.4 C1.7 6 3.2 6.5 5 7 C6.9 7.5 8.4 8 8.4 9.8 C8.4 11.3 7 12.2 5 12.2 C3 12.2 1.7 11.5 1.4 10" fill="none" stroke="#63c283" stroke-width="2.5"/><path d="M5 0.2 L5 2.6 M5 11.8 L5 14.2" stroke="#63c283" stroke-width="2.2"/></svg>
<div style="position:absolute;left:280.3px;top:591.64px;width:9.6px;height:9.6px;border:1.2px solid #8c8c8c;border-radius:2px;background:#fff"></div>
<div style="position:absolute;left:305.20px;top:588.34px;width:13.2px;height:13.6px;border:1px solid #d4d4d4;border-radius:3px;background:#fff;text-align:center;font-size:11.25px;line-height:12.6px;font-weight:bold;color:#1a1a1a">R</div>
<div style="position:absolute;left:314.40px;top:599.14px;width:8.8px;height:8.8px;border-radius:50%;background:#8a8a8a"></div>
<div style="position:absolute;left:324.10px;top:588.34px;width:13.2px;height:13.6px;border:1px solid #d4d4d4;border-radius:3px;background:#fff;text-align:center;font-size:11.25px;line-height:12.6px;font-weight:bold;color:#1a1a1a">A</div>
<div style="position:absolute;left:333.30px;top:599.14px;width:8.8px;height:8.8px;border-radius:50%;background:#1ee01e"></div>
<div style="position:absolute;left:343.00px;top:588.34px;width:13.2px;height:13.6px;border:1px solid #d4d4d4;border-radius:3px;background:#fff;text-align:center;font-size:11.25px;line-height:12.6px;font-weight:bold;color:#1a1a1a">4</div>
<div style="position:absolute;left:361.90px;top:588.34px;width:13.2px;height:13.6px;border:1px solid #d4d4d4;border-radius:3px;background:#fff;text-align:center;font-size:11.25px;line-height:12.6px;font-weight:bold;color:#1a1a1a">I</div>
<div style="position:absolute;left:380.80px;top:588.34px;width:13.2px;height:13.6px;border:1px solid #e2e2e2;border-radius:3px;background:#fff;text-align:center;font-size:11.25px;line-height:12.6px;font-weight:bold;color:#aaa">$</div>
<div class="t" style="left:410.6px;top:593.39px;font-size:10.3px;color:#444;font-weight:normal;">Luiz dos Santos</div>
<svg style="position:absolute;left:561.00px;top:591.24px" width="11" height="11" viewBox="0 0 11 11"><path d="M5.5 0.6 A4.8 4.8 0 1 1 2.9 9.6 L0.7 10.3 L1.4 8.2 A4.8 4.8 0 0 1 5.5 0.6 Z" fill="#2fcf8e"/><path d="M3.6 3.2 C3.4 4.6 5.3 7.2 7.4 7.4 L7.9 6.7 L6.8 6.1 L6.3 6.6 C5.6 6.3 4.8 5.5 4.5 4.8 L5 4.3 L4.4 3.1 Z" fill="#fff"/></svg>
<div class="t" style="left:575px;top:590.59px;font-size:10.3px;color:#555;font-weight:normal;">(44) 3809-0044</div>
<svg style="position:absolute;left:674.60px;top:591.24px" width="11" height="11" viewBox="0 0 11 11"><path d="M5.5 0.6 A4.8 4.8 0 1 1 2.9 9.6 L0.7 10.3 L1.4 8.2 A4.8 4.8 0 0 1 5.5 0.6 Z" fill="#2fcf8e"/><path d="M3.6 3.2 C3.4 4.6 5.3 7.2 7.4 7.4 L7.9 6.7 L6.8 6.1 L6.3 6.6 C5.6 6.3 4.8 5.5 4.5 4.8 L5 4.3 L4.4 3.1 Z" fill="#fff"/></svg>
<div class="t" style="left:688.7px;top:590.59px;font-size:10.3px;color:#555;font-weight:normal;">(44) 9654-0101</div>
<div class="t" style="left:786.5px;top:592.99px;font-size:10.3px;color:#444;font-weight:normal;">luizdossantos@sub100.com.br</div>
<div class="t" style="left:963.7px;top:592.99px;font-size:10.3px;color:#444;font-weight:normal;">02/07/2022</div>
<div class="t" style="left:1031.3px;top:592.99px;font-size:10.3px;color:#444;font-weight:normal;">Ativo</div>
<svg style="position:absolute;left:1073px;top:588.94px" width="15" height="15" viewBox="0 0 15 15"><rect x="0.6" y="0.6" width="10.8" height="12.8" fill="#fff" stroke="#cfcfcf" stroke-width="1"/><path d="M2.2 11.6 L3.2 8.6 L10.6 1.2 L12.6 3.2 L5.2 10.6 Z" fill="#f9d648" stroke="#dca32a" stroke-width="0.8"/><path d="M2.2 11.6 L3.2 8.6 L5.2 10.6 Z" fill="#a8582c"/></svg>
<svg style="position:absolute;left:1093.2px;top:588.94px" width="13" height="15" viewBox="0 0 13 15"><rect x="1" y="0.5" width="11.2" height="12.9" fill="#fff" stroke="#c3cdd6" stroke-width="0.9"/><rect x="0.2" y="0.2" width="2.4" height="13.4" fill="#d9773c"/><path d="M3.8 11.6 C3.6 7.4 12.2 7.4 12 11.6 Z" fill="#4f5358"/><circle cx="8" cy="5.4" r="2.5" fill="#efc39a"/><path d="M5.3 5.3 C5 1.9 11 1.9 10.7 5.3 C10 4 6 4 5.3 5.3 Z" fill="#9c4418"/></svg>
<svg style="position:absolute;left:1111px;top:590.44px" width="15" height="12" viewBox="0 0 15 12"><path d="M0.6 0.6 L4.8 0.6 L6 1.9 L11.8 1.9 L11.8 10.8 L0.6 10.8 Z" fill="#fdf2c8" stroke="#e0a850" stroke-width="1"/><path d="M2.8 4.6 L14.2 4.6 L12 10.8 L0.6 10.8 Z" fill="#fbd96a" stroke="#e0a850" stroke-width="1"/></svg>
<svg style="position:absolute;left:1132px;top:588.94px" width="15" height="15" viewBox="0 0 15 15"><path d="M2.3 6.5 L2.3 2 Q2.3 0.6 3.7 0.6 L9.8 0.6 L11.8 2.8 L11.8 6.5 Z" fill="#cde6f6" stroke="#6f9cbf" stroke-width="0.9"/><rect x="0.5" y="5.6" width="13" height="6.8" rx="1.6" fill="#c9cdd0" stroke="#5d6368" stroke-width="0.9"/><rect x="3" y="7.3" width="8" height="2.2" fill="#eef0f2"/><rect x="2.8" y="11.2" width="8.4" height="2.4" rx="0.6" fill="#dcecf7" stroke="#7aa2c2" stroke-width="0.8"/></svg>
<svg style="position:absolute;left:1153.5px;top:589.14px" width="10" height="15" viewBox="0 0 10 15"><path d="M8.4 4 C8.1 2.6 6.9 2.1 5 2.1 C3 2.1 1.7 3 1.7 4.4 C1.7 6 3.2 6.5 5 7 C6.9 7.5 8.4 8 8.4 9.8 C8.4 11.3 7 12.2 5 12.2 C3 12.2 1.7 11.5 1.4 10" fill="none" stroke="#63c283" stroke-width="2.5"/><path d="M5 0.2 L5 2.6 M5 11.8 L5 14.2" stroke="#63c283" stroke-width="2.2"/></svg>
<div style="position:absolute;left:280.3px;top:620.72px;width:9.6px;height:9.6px;border:1.2px solid #8c8c8c;border-radius:2px;background:#fff"></div>
<div style="position:absolute;left:305.20px;top:617.42px;width:13.2px;height:13.6px;border:1px solid #d4d4d4;border-radius:3px;background:#fff;text-align:center;font-size:11.25px;line-height:12.6px;font-weight:bold;color:#1a1a1a">Q</div>
<div style="position:absolute;left:314.40px;top:628.22px;width:8.8px;height:8.8px;border-radius:50%;background:#ff1ee8"></div>
<div style="position:absolute;left:324.10px;top:617.42px;width:13.2px;height:13.6px;border:1px solid #d4d4d4;border-radius:3px;background:#fff;text-align:center;font-size:11.25px;line-height:12.6px;font-weight:bold;color:#1a1a1a">M</div>
<div style="position:absolute;left:333.30px;top:628.22px;width:8.8px;height:8.8px;border-radius:50%;background:#ffd000"></div>
<div style="position:absolute;left:343.00px;top:617.42px;width:13.2px;height:13.6px;border:1px solid #d4d4d4;border-radius:3px;background:#fff;text-align:center;font-size:11.25px;line-height:12.6px;font-weight:bold;color:#1a1a1a">1</div>
<div style="position:absolute;left:361.90px;top:617.42px;width:13.2px;height:13.6px;border:1px solid #b4b4b4;border-radius:3px;background:#fff;text-align:center;font-size:11.25px;line-height:12.6px;font-weight:bold;color:#1a1a1a">M</div>
<div style="position:absolute;left:380.80px;top:617.42px;width:13.2px;height:13.6px;border:1px solid #e2e2e2;border-radius:3px;background:#fff;text-align:center;font-size:11.25px;line-height:12.6px;font-weight:bold;color:#aaa">$</div>
<div class="t" style="left:410.6px;top:622.47px;font-size:10.3px;color:#444;font-weight:normal;">Josiane Andrade da silva</div>
<svg style="position:absolute;left:561.00px;top:620.32px" width="11" height="11" viewBox="0 0 11 11"><path d="M5.5 0.6 A4.8 4.8 0 1 1 2.9 9.6 L0.7 10.3 L1.4 8.2 A4.8 4.8 0 0 1 5.5 0.6 Z" fill="#2fcf8e"/><path d="M3.6 3.2 C3.4 4.6 5.3 7.2 7.4 7.4 L7.9 6.7 L6.8 6.1 L6.3 6.6 C5.6 6.3 4.8 5.5 4.5 4.8 L5 4.3 L4.4 3.1 Z" fill="#fff"/></svg>
<div class="t" style="left:575px;top:619.67px;font-size:10.3px;color:#555;font-weight:normal;">(44) 3425-8787</div>
<svg style="position:absolute;left:674.60px;top:620.32px" width="11" height="11" viewBox="0 0 11 11"><path d="M5.5 0.6 A4.8 4.8 0 1 1 2.9 9.6 L0.7 10.3 L1.4 8.2 A4.8 4.8 0 0 1 5.5 0.6 Z" fill="#2fcf8e"/><path d="M3.6 3.2 C3.4 4.6 5.3 7.2 7.4 7.4 L7.9 6.7 L6.8 6.1 L6.3 6.6 C5.6 6.3 4.8 5.5 4.5 4.8 L5 4.3 L4.4 3.1 Z" fill="#fff"/></svg>
<div class="t" style="left:688.7px;top:619.67px;font-size:10.3px;color:#555;font-weight:normal;">(44) 98912-0000</div>
<div class="t" style="left:786.5px;top:622.07px;font-size:10.3px;color:#444;font-weight:normal;">josiane@sub100.com.br</div>
<div class="t" style="left:963.7px;top:622.07px;font-size:10.3px;color:#444;font-weight:normal;">29/06/2022</div>
<div class="t" style="left:1031.3px;top:622.07px;font-size:10.3px;color:#444;font-weight:normal;">Ativo</div>
<svg style="position:absolute;left:1073px;top:618.02px" width="15" height="15" viewBox="0 0 15 15"><rect x="0.6" y="0.6" width="10.8" height="12.8" fill="#fff" stroke="#cfcfcf" stroke-width="1"/><path d="M2.2 11.6 L3.2 8.6 L10.6 1.2 L12.6 3.2 L5.2 10.6 Z" fill="#f9d648" stroke="#dca32a" stroke-width="0.8"/><path d="M2.2 11.6 L3.2 8.6 L5.2 10.6 Z" fill="#a8582c"/></svg>
<svg style="position:absolute;left:1093.2px;top:618.02px" width="13" height="15" viewBox="0 0 13 15"><rect x="1" y="0.5" width="11.2" height="12.9" fill="#fff" stroke="#c3cdd6" stroke-width="0.9"/><rect x="0.2" y="0.2" width="2.4" height="13.4" fill="#d9773c"/><path d="M3.8 11.6 C3.6 7.4 12.2 7.4 12 11.6 Z" fill="#4f5358"/><circle cx="8" cy="5.4" r="2.5" fill="#efc39a"/><path d="M5.3 5.3 C5 1.9 11 1.9 10.7 5.3 C10 4 6 4 5.3 5.3 Z" fill="#9c4418"/></svg>
<svg style="position:absolute;left:1111px;top:619.52px" width="15" height="12" viewBox="0 0 15 12"><path d="M0.6 0.6 L4.8 0.6 L6 1.9 L11.8 1.9 L11.8 10.8 L0.6 10.8 Z" fill="#fdf2c8" stroke="#e0a850" stroke-width="1"/><path d="M2.8 4.6 L14.2 4.6 L12 10.8 L0.6 10.8 Z" fill="#fbd96a" stroke="#e0a850" stroke-width="1"/></svg>
<svg style="position:absolute;left:1132px;top:618.02px" width="15" height="15" viewBox="0 0 15 15"><path d="M2.3 6.5 L2.3 2 Q2.3 0.6 3.7 0.6 L9.8 0.6 L11.8 2.8 L11.8 6.5 Z" fill="#cde6f6" stroke="#6f9cbf" stroke-width="0.9"/><rect x="0.5" y="5.6" width="13" height="6.8" rx="1.6" fill="#c9cdd0" stroke="#5d6368" stroke-width="0.9"/><rect x="3" y="7.3" width="8" height="2.2" fill="#eef0f2"/><rect x="2.8" y="11.2" width="8.4" height="2.4" rx="0.6" fill="#dcecf7" stroke="#7aa2c2" stroke-width="0.8"/></svg>
<svg style="position:absolute;left:1153.5px;top:618.22px" width="10" height="15" viewBox="0 0 10 15"><path d="M8.4 4 C8.1 2.6 6.9 2.1 5 2.1 C3 2.1 1.7 3 1.7 4.4 C1.7 6 3.2 6.5 5 7 C6.9 7.5 8.4 8 8.4 9.8 C8.4 11.3 7 12.2 5 12.2 C3 12.2 1.7 11.5 1.4 10" fill="none" stroke="#63c283" stroke-width="2.5"/><path d="M5 0.2 L5 2.6 M5 11.8 L5 14.2" stroke="#63c283" stroke-width="2.2"/></svg>
<div style="position:absolute;left:280.3px;top:649.80px;width:9.6px;height:9.6px;border:1.2px solid #8c8c8c;border-radius:2px;background:#fff"></div>
<div style="position:absolute;left:305.20px;top:646.50px;width:13.2px;height:13.6px;border:1px solid #d4d4d4;border-radius:3px;background:#fff;text-align:center;font-size:11.25px;line-height:12.6px;font-weight:bold;color:#1a1a1a">N</div>
<div style="position:absolute;left:314.40px;top:657.30px;width:8.8px;height:8.8px;border-radius:50%;background:#1866fa"></div>
<div style="position:absolute;left:324.10px;top:646.50px;width:13.2px;height:13.6px;border:1px solid #d4d4d4;border-radius:3px;background:#fff;text-align:center;font-size:11.25px;line-height:12.6px;font-weight:bold;color:#1a1a1a">B</div>
<div style="position:absolute;left:333.30px;top:657.30px;width:8.8px;height:8.8px;border-radius:50%;background:#ff1414"></div>
<div style="position:absolute;left:343.00px;top:646.50px;width:13.2px;height:13.6px;border:1px solid #d4d4d4;border-radius:3px;background:#fff;text-align:center;font-size:11.25px;line-height:12.6px;font-weight:bold;color:#1a1a1a">3</div>
<div style="position:absolute;left:361.90px;top:646.50px;width:13.2px;height:13.6px;border:1px solid #b4b4b4;border-radius:3px;background:#fff;text-align:center;font-size:11.25px;line-height:12.6px;font-weight:bold;color:#1a1a1a">M</div>
<div style="position:absolute;left:380.80px;top:646.50px;width:13.2px;height:13.6px;border:1px solid #e2e2e2;border-radius:3px;background:#fff;text-align:center;font-size:11.25px;line-height:12.6px;font-weight:bold;color:#aaa">$</div>
<div class="t" style="left:410.6px;top:651.55px;font-size:10.3px;color:#444;font-weight:normal;">Adriano Arantes Silvestre</div>
<svg style="position:absolute;left:561.00px;top:649.40px" width="11" height="11" viewBox="0 0 11 11"><path d="M5.5 0.6 A4.8 4.8 0 1 1 2.9 9.6 L0.7 10.3 L1.4 8.2 A4.8 4.8 0 0 1 5.5 0.6 Z" fill="#2fcf8e"/><path d="M3.6 3.2 C3.4 4.6 5.3 7.2 7.4 7.4 L7.9 6.7 L6.8 6.1 L6.3 6.6 C5.6 6.3 4.8 5.5 4.5 4.8 L5 4.3 L4.4 3.1 Z" fill="#fff"/></svg>
<div class="t" style="left:575px;top:648.75px;font-size:10.3px;color:#555;font-weight:normal;">(44) 3025-1717</div>
<svg style="position:absolute;left:674.60px;top:649.40px" width="11" height="11" viewBox="0 0 11 11"><path d="M5.5 0.6 A4.8 4.8 0 1 1 2.9 9.6 L0.7 10.3 L1.4 8.2 A4.8 4.8 0 0 1 5.5 0.6 Z" fill="#2fcf8e"/><path d="M3.6 3.2 C3.4 4.6 5.3 7.2 7.4 7.4 L7.9 6.7 L6.8 6.1 L6.3 6.6 C5.6 6.3 4.8 5.5 4.5 4.8 L5 4.3 L4.4 3.1 Z" fill="#fff"/></svg>
<div class="t" style="left:688.7px;top:648.75px;font-size:10.3px;color:#555;font-weight:normal;">(44) 98801-0000</div>
<div class="t" style="left:786.5px;top:651.15px;font-size:10.3px;color:#444;font-weight:normal;">adrianoarantes@sub100.com.br</div>
<div class="t" style="left:963.7px;top:651.15px;font-size:10.3px;color:#444;font-weight:normal;">29/06/2022</div>
<div class="t" style="left:1031.3px;top:651.15px;font-size:10.3px;color:#444;font-weight:normal;">Ativo</div>
<svg style="position:absolute;left:1073px;top:647.10px" width="15" height="15" viewBox="0 0 15 15"><rect x="0.6" y="0.6" width="10.8" height="12.8" fill="#fff" stroke="#cfcfcf" stroke-width="1"/><path d="M2.2 11.6 L3.2 8.6 L10.6 1.2 L12.6 3.2 L5.2 10.6 Z" fill="#f9d648" stroke="#dca32a" stroke-width="0.8"/><path d="M2.2 11.6 L3.2 8.6 L5.2 10.6 Z" fill="#a8582c"/></svg>
<svg style="position:absolute;left:1093.2px;top:647.10px" width="13" height="15" viewBox="0 0 13 15"><rect x="1" y="0.5" width="11.2" height="12.9" fill="#fff" stroke="#c3cdd6" stroke-width="0.9"/><rect x="0.2" y="0.2" width="2.4" height="13.4" fill="#d9773c"/><path d="M3.8 11.6 C3.6 7.4 12.2 7.4 12 11.6 Z" fill="#4f5358"/><circle cx="8" cy="5.4" r="2.5" fill="#efc39a"/><path d="M5.3 5.3 C5 1.9 11 1.9 10.7 5.3 C10 4 6 4 5.3 5.3 Z" fill="#9c4418"/></svg>
<svg style="position:absolute;left:1111px;top:648.60px" width="15" height="12" viewBox="0 0 15 12"><path d="M0.6 0.6 L4.8 0.6 L6 1.9 L11.8 1.9 L11.8 10.8 L0.6 10.8 Z" fill="#fdf2c8" stroke="#e0a850" stroke-width="1"/><path d="M2.8 4.6 L14.2 4.6 L12 10.8 L0.6 10.8 Z" fill="#fbd96a" stroke="#e0a850" stroke-width="1"/></svg>
<svg style="position:absolute;left:1132px;top:647.10px" width="15" height="15" viewBox="0 0 15 15"><path d="M2.3 6.5 L2.3 2 Q2.3 0.6 3.7 0.6 L9.8 0.6 L11.8 2.8 L11.8 6.5 Z" fill="#cde6f6" stroke="#6f9cbf" stroke-width="0.9"/><rect x="0.5" y="5.6" width="13" height="6.8" rx="1.6" fill="#c9cdd0" stroke="#5d6368" stroke-width="0.9"/><rect x="3" y="7.3" width="8" height="2.2" fill="#eef0f2"/><rect x="2.8" y="11.2" width="8.4" height="2.4" rx="0.6" fill="#dcecf7" stroke="#7aa2c2" stroke-width="0.8"/></svg>
<svg style="position:absolute;left:1153.5px;top:647.30px" width="10" height="15" viewBox="0 0 10 15"><path d="M8.4 4 C8.1 2.6 6.9 2.1 5 2.1 C3 2.1 1.7 3 1.7 4.4 C1.7 6 3.2 6.5 5 7 C6.9 7.5 8.4 8 8.4 9.8 C8.4 11.3 7 12.2 5 12.2 C3 12.2 1.7 11.5 1.4 10" fill="none" stroke="#63c283" stroke-width="2.5"/><path d="M5 0.2 L5 2.6 M5 11.8 L5 14.2" stroke="#63c283" stroke-width="2.2"/></svg>
<div style="position:absolute;left:280.3px;top:678.88px;width:9.6px;height:9.6px;border:1.2px solid #8c8c8c;border-radius:2px;background:#fff"></div>
<div style="position:absolute;left:305.20px;top:675.58px;width:13.2px;height:13.6px;border:1px solid #d4d4d4;border-radius:3px;background:#fff;text-align:center;font-size:11.25px;line-height:12.6px;font-weight:bold;color:#1a1a1a">Q</div>
<div style="position:absolute;left:314.40px;top:686.38px;width:8.8px;height:8.8px;border-radius:50%;background:#ff1ee8"></div>
<div style="position:absolute;left:324.10px;top:675.58px;width:13.2px;height:13.6px;border:1px solid #d4d4d4;border-radius:3px;background:#fff;text-align:center;font-size:11.25px;line-height:12.6px;font-weight:bold;color:#1a1a1a">M</div>
<div style="position:absolute;left:333.30px;top:686.38px;width:8.8px;height:8.8px;border-radius:50%;background:#ffd000"></div>
<div style="position:absolute;left:343.00px;top:675.58px;width:13.2px;height:13.6px;border:1px solid #d4d4d4;border-radius:3px;background:#fff;text-align:center;font-size:11.25px;line-height:12.6px;font-weight:bold;color:#1a1a1a">2</div>
<div style="position:absolute;left:361.90px;top:675.58px;width:13.2px;height:13.6px;border:1px solid #b4b4b4;border-radius:3px;background:#fff;text-align:center;font-size:11.25px;line-height:12.6px;font-weight:bold;color:#1a1a1a">M</div>
<div style="position:absolute;left:380.80px;top:675.58px;width:13.2px;height:13.6px;border:1px solid #e2e2e2;border-radius:3px;background:#fff;text-align:center;font-size:11.25px;line-height:12.6px;font-weight:bold;color:#aaa">$</div>
<div class="t" style="left:410.6px;top:680.63px;font-size:10.3px;color:#444;font-weight:normal;">Maycon Baptista de Oliveira</div>
<svg style="position:absolute;left:561.00px;top:678.48px" width="11" height="11" viewBox="0 0 11 11"><path d="M5.5 0.6 A4.8 4.8 0 1 1 2.9 9.6 L0.7 10.3 L1.4 8.2 A4.8 4.8 0 0 1 5.5 0.6 Z" fill="#2fcf8e"/><path d="M3.6 3.2 C3.4 4.6 5.3 7.2 7.4 7.4 L7.9 6.7 L6.8 6.1 L6.3 6.6 C5.6 6.3 4.8 5.5 4.5 4.8 L5 4.3 L4.4 3.1 Z" fill="#fff"/></svg>
<div class="t" style="left:575px;top:677.83px;font-size:10.3px;color:#555;font-weight:normal;">(44) 3025-2222</div>
<svg style="position:absolute;left:674.60px;top:678.48px" width="11" height="11" viewBox="0 0 11 11"><path d="M5.5 0.6 A4.8 4.8 0 1 1 2.9 9.6 L0.7 10.3 L1.4 8.2 A4.8 4.8 0 0 1 5.5 0.6 Z" fill="#2fcf8e"/><path d="M3.6 3.2 C3.4 4.6 5.3 7.2 7.4 7.4 L7.9 6.7 L6.8 6.1 L6.3 6.6 C5.6 6.3 4.8 5.5 4.5 4.8 L5 4.3 L4.4 3.1 Z" fill="#fff"/></svg>
<div class="t" style="left:688.7px;top:677.83px;font-size:10.3px;color:#555;font-weight:normal;">(44) 98404-0000</div>
<div class="t" style="left:786.5px;top:680.23px;font-size:10.3px;color:#444;font-weight:normal;">mayconb@sub100.com.br</div>
<div class="t" style="left:963.7px;top:680.23px;font-size:10.3px;color:#444;font-weight:normal;">29/06/2022</div>
<div class="t" style="left:1031.3px;top:680.23px;font-size:10.3px;color:#444;font-weight:normal;">Ativo</div>
<svg style="position:absolute;left:1073px;top:676.18px" width="15" height="15" viewBox="0 0 15 15"><rect x="0.6" y="0.6" width="10.8" height="12.8" fill="#fff" stroke="#cfcfcf" stroke-width="1"/><path d="M2.2 11.6 L3.2 8.6 L10.6 1.2 L12.6 3.2 L5.2 10.6 Z" fill="#f9d648" stroke="#dca32a" stroke-width="0.8"/><path d="M2.2 11.6 L3.2 8.6 L5.2 10.6 Z" fill="#a8582c"/></svg>
<svg style="position:absolute;left:1093.2px;top:676.18px" width="13" height="15" viewBox="0 0 13 15"><rect x="1" y="0.5" width="11.2" height="12.9" fill="#fff" stroke="#c3cdd6" stroke-width="0.9"/><rect x="0.2" y="0.2" width="2.4" height="13.4" fill="#d9773c"/><path d="M3.8 11.6 C3.6 7.4 12.2 7.4 12 11.6 Z" fill="#4f5358"/><circle cx="8" cy="5.4" r="2.5" fill="#efc39a"/><path d="M5.3 5.3 C5 1.9 11 1.9 10.7 5.3 C10 4 6 4 5.3 5.3 Z" fill="#9c4418"/></svg>
<svg style="position:absolute;left:1111px;top:677.68px" width="15" height="12" viewBox="0 0 15 12"><path d="M0.6 0.6 L4.8 0.6 L6 1.9 L11.8 1.9 L11.8 10.8 L0.6 10.8 Z" fill="#fdf2c8" stroke="#e0a850" stroke-width="1"/><path d="M2.8 4.6 L14.2 4.6 L12 10.8 L0.6 10.8 Z" fill="#fbd96a" stroke="#e0a850" stroke-width="1"/></svg>
<svg style="position:absolute;left:1132px;top:676.18px" width="15" height="15" viewBox="0 0 15 15"><path d="M2.3 6.5 L2.3 2 Q2.3 0.6 3.7 0.6 L9.8 0.6 L11.8 2.8 L11.8 6.5 Z" fill="#cde6f6" stroke="#6f9cbf" stroke-width="0.9"/><rect x="0.5" y="5.6" width="13" height="6.8" rx="1.6" fill="#c9cdd0" stroke="#5d6368" stroke-width="0.9"/><rect x="3" y="7.3" width="8" height="2.2" fill="#eef0f2"/><rect x="2.8" y="11.2" width="8.4" height="2.4" rx="0.6" fill="#dcecf7" stroke="#7aa2c2" stroke-width="0.8"/></svg>
<svg style="position:absolute;left:1153.5px;top:676.38px" width="10" height="15" viewBox="0 0 10 15"><path d="M8.4 4 C8.1 2.6 6.9 2.1 5 2.1 C3 2.1 1.7 3 1.7 4.4 C1.7 6 3.2 6.5 5 7 C6.9 7.5 8.4 8 8.4 9.8 C8.4 11.3 7 12.2 5 12.2 C3 12.2 1.7 11.5 1.4 10" fill="none" stroke="#63c283" stroke-width="2.5"/><path d="M5 0.2 L5 2.6 M5 11.8 L5 14.2" stroke="#63c283" stroke-width="2.2"/></svg>
<div style="position:absolute;left:280.3px;top:707.96px;width:9.6px;height:9.6px;border:1.2px solid #8c8c8c;border-radius:2px;background:#fff"></div>
<div style="position:absolute;left:305.20px;top:704.66px;width:13.2px;height:13.6px;border:1px solid #d4d4d4;border-radius:3px;background:#fff;text-align:center;font-size:11.25px;line-height:12.6px;font-weight:bold;color:#1a1a1a">N</div>
<div style="position:absolute;left:314.40px;top:715.46px;width:8.8px;height:8.8px;border-radius:50%;background:#1866fa"></div>
<div style="position:absolute;left:324.10px;top:704.66px;width:13.2px;height:13.6px;border:1px solid #d4d4d4;border-radius:3px;background:#fff;text-align:center;font-size:11.25px;line-height:12.6px;font-weight:bold;color:#1a1a1a">M</div>
<div style="position:absolute;left:333.30px;top:715.46px;width:8.8px;height:8.8px;border-radius:50%;background:#ffd000"></div>
<div style="position:absolute;left:343.00px;top:704.66px;width:13.2px;height:13.6px;border:1px solid #d4d4d4;border-radius:3px;background:#fff;text-align:center;font-size:11.25px;line-height:12.6px;font-weight:bold;color:#1a1a1a">1</div>
<div style="position:absolute;left:361.90px;top:704.66px;width:13.2px;height:13.6px;border:1px solid #b4b4b4;border-radius:3px;background:#fff;text-align:center;font-size:11.25px;line-height:12.6px;font-weight:bold;color:#1a1a1a">M</div>
<div style="position:absolute;left:380.80px;top:704.66px;width:13.2px;height:13.6px;border:1px solid #e2e2e2;border-radius:3px;background:#fff;text-align:center;font-size:11.25px;line-height:12.6px;font-weight:bold;color:#aaa">$</div>
<div class="t" style="left:410.6px;top:709.71px;font-size:10.3px;color:#444;font-weight:normal;">Sandra Neves</div>
<svg style="position:absolute;left:561.00px;top:707.56px" width="11" height="11" viewBox="0 0 11 11"><path d="M5.5 0.6 A4.8 4.8 0 1 1 2.9 9.6 L0.7 10.3 L1.4 8.2 A4.8 4.8 0 0 1 5.5 0.6 Z" fill="#2fcf8e"/><path d="M3.6 3.2 C3.4 4.6 5.3 7.2 7.4 7.4 L7.9 6.7 L6.8 6.1 L6.3 6.6 C5.6 6.3 4.8 5.5 4.5 4.8 L5 4.3 L4.4 3.1 Z" fill="#fff"/></svg>
<div class="t" style="left:575px;top:706.91px;font-size:10.3px;color:#555;font-weight:normal;">(44) 3425-8585</div>
<svg style="position:absolute;left:674.60px;top:707.56px" width="11" height="11" viewBox="0 0 11 11"><path d="M5.5 0.6 A4.8 4.8 0 1 1 2.9 9.6 L0.7 10.3 L1.4 8.2 A4.8 4.8 0 0 1 5.5 0.6 Z" fill="#2fcf8e"/><path d="M3.6 3.2 C3.4 4.6 5.3 7.2 7.4 7.4 L7.9 6.7 L6.8 6.1 L6.3 6.6 C5.6 6.3 4.8 5.5 4.5 4.8 L5 4.3 L4.4 3.1 Z" fill="#fff"/></svg>
<div class="t" style="left:688.7px;top:706.91px;font-size:10.3px;color:#555;font-weight:normal;">(44) 98841-0000</div>
<div class="t" style="left:786.5px;top:709.31px;font-size:10.3px;color:#444;font-weight:normal;">sandra@sub100.com.br</div>
<div class="t" style="left:963.7px;top:709.31px;font-size:10.3px;color:#444;font-weight:normal;">29/06/2022</div>
<div class="t" style="left:1031.3px;top:709.31px;font-size:10.3px;color:#444;font-weight:normal;">Ativo</div>
<svg style="position:absolute;left:1073px;top:705.26px" width="15" height="15" viewBox="0 0 15 15"><rect x="0.6" y="0.6" width="10.8" height="12.8" fill="#fff" stroke="#cfcfcf" stroke-width="1"/><path d="M2.2 11.6 L3.2 8.6 L10.6 1.2 L12.6 3.2 L5.2 10.6 Z" fill="#f9d648" stroke="#dca32a" stroke-width="0.8"/><path d="M2.2 11.6 L3.2 8.6 L5.2 10.6 Z" fill="#a8582c"/></svg>
<svg style="position:absolute;left:1093.2px;top:705.26px" width="13" height="15" viewBox="0 0 13 15"><rect x="1" y="0.5" width="11.2" height="12.9" fill="#fff" stroke="#c3cdd6" stroke-width="0.9"/><rect x="0.2" y="0.2" width="2.4" height="13.4" fill="#d9773c"/><path d="M3.8 11.6 C3.6 7.4 12.2 7.4 12 11.6 Z" fill="#4f5358"/><circle cx="8" cy="5.4" r="2.5" fill="#efc39a"/><path d="M5.3 5.3 C5 1.9 11 1.9 10.7 5.3 C10 4 6 4 5.3 5.3 Z" fill="#9c4418"/></svg>
<svg style="position:absolute;left:1111px;top:706.76px" width="15" height="12" viewBox="0 0 15 12"><path d="M0.6 0.6 L4.8 0.6 L6 1.9 L11.8 1.9 L11.8 10.8 L0.6 10.8 Z" fill="#fdf2c8" stroke="#e0a850" stroke-width="1"/><path d="M2.8 4.6 L14.2 4.6 L12 10.8 L0.6 10.8 Z" fill="#fbd96a" stroke="#e0a850" stroke-width="1"/></svg>
<svg style="position:absolute;left:1132px;top:705.26px" width="15" height="15" viewBox="0 0 15 15"><path d="M2.3 6.5 L2.3 2 Q2.3 0.6 3.7 0.6 L9.8 0.6 L11.8 2.8 L11.8 6.5 Z" fill="#cde6f6" stroke="#6f9cbf" stroke-width="0.9"/><rect x="0.5" y="5.6" width="13" height="6.8" rx="1.6" fill="#c9cdd0" stroke="#5d6368" stroke-width="0.9"/><rect x="3" y="7.3" width="8" height="2.2" fill="#eef0f2"/><rect x="2.8" y="11.2" width="8.4" height="2.4" rx="0.6" fill="#dcecf7" stroke="#7aa2c2" stroke-width="0.8"/></svg>
<svg style="position:absolute;left:1153.5px;top:705.46px" width="10" height="15" viewBox="0 0 10 15"><path d="M8.4 4 C8.1 2.6 6.9 2.1 5 2.1 C3 2.1 1.7 3 1.7 4.4 C1.7 6 3.2 6.5 5 7 C6.9 7.5 8.4 8 8.4 9.8 C8.4 11.3 7 12.2 5 12.2 C3 12.2 1.7 11.5 1.4 10" fill="none" stroke="#63c283" stroke-width="2.5"/><path d="M5 0.2 L5 2.6 M5 11.8 L5 14.2" stroke="#63c283" stroke-width="2.2"/></svg>
<div style="position:absolute;left:280.3px;top:737.04px;width:9.6px;height:9.6px;border:1.2px solid #8c8c8c;border-radius:2px;background:#fff"></div>
<div style="position:absolute;left:305.20px;top:733.74px;width:13.2px;height:13.6px;border:1px solid #d4d4d4;border-radius:3px;background:#fff;text-align:center;font-size:11.25px;line-height:12.6px;font-weight:bold;color:#1a1a1a">N</div>
<div style="position:absolute;left:314.40px;top:744.54px;width:8.8px;height:8.8px;border-radius:50%;background:#1866fa"></div>
<div style="position:absolute;left:324.10px;top:733.74px;width:13.2px;height:13.6px;border:1px solid #d4d4d4;border-radius:3px;background:#fff;text-align:center;font-size:11.25px;line-height:12.6px;font-weight:bold;color:#1a1a1a">A</div>
<div style="position:absolute;left:333.30px;top:744.54px;width:8.8px;height:8.8px;border-radius:50%;background:#1ee01e"></div>
<div style="position:absolute;left:343.00px;top:733.74px;width:13.2px;height:13.6px;border:1px solid #d4d4d4;border-radius:3px;background:#fff;text-align:center;font-size:11.25px;line-height:12.6px;font-weight:bold;color:#1a1a1a">1</div>
<div style="position:absolute;left:361.90px;top:733.74px;width:13.2px;height:13.6px;border:1px solid #b4b4b4;border-radius:3px;background:#fff;text-align:center;font-size:11.25px;line-height:12.6px;font-weight:bold;color:#1a1a1a">M</div>
<div style="position:absolute;left:380.80px;top:733.74px;width:13.2px;height:13.6px;border:1px solid #e2e2e2;border-radius:3px;background:#fff;text-align:center;font-size:11.25px;line-height:12.6px;font-weight:bold;color:#aaa">$</div>
<div class="t" style="left:410.6px;top:738.79px;font-size:10.3px;color:#444;font-weight:normal;">Thiago de Oliveira Cardoso</div>
<svg style="position:absolute;left:561.00px;top:736.64px" width="11" height="11" viewBox="0 0 11 11"><path d="M5.5 0.6 A4.8 4.8 0 1 1 2.9 9.6 L0.7 10.3 L1.4 8.2 A4.8 4.8 0 0 1 5.5 0.6 Z" fill="#2fcf8e"/><path d="M3.6 3.2 C3.4 4.6 5.3 7.2 7.4 7.4 L7.9 6.7 L6.8 6.1 L6.3 6.6 C5.6 6.3 4.8 5.5 4.5 4.8 L5 4.3 L4.4 3.1 Z" fill="#fff"/></svg>
<div class="t" style="left:575px;top:735.99px;font-size:10.3px;color:#555;font-weight:normal;">(44) 3201-2424</div>
<svg style="position:absolute;left:674.60px;top:736.64px" width="11" height="11" viewBox="0 0 11 11"><path d="M5.5 0.6 A4.8 4.8 0 1 1 2.9 9.6 L0.7 10.3 L1.4 8.2 A4.8 4.8 0 0 1 5.5 0.6 Z" fill="#2fcf8e"/><path d="M3.6 3.2 C3.4 4.6 5.3 7.2 7.4 7.4 L7.9 6.7 L6.8 6.1 L6.3 6.6 C5.6 6.3 4.8 5.5 4.5 4.8 L5 4.3 L4.4 3.1 Z" fill="#fff"/></svg>
<div class="t" style="left:688.7px;top:735.99px;font-size:10.3px;color:#555;font-weight:normal;">(44) 91990-0100</div>
<div class="t" style="left:786.5px;top:738.39px;font-size:10.3px;color:#444;font-weight:normal;">thiago@sub100.com.br</div>
<div class="t" style="left:963.7px;top:738.39px;font-size:10.3px;color:#444;font-weight:normal;">29/06/2022</div>
<div class="t" style="left:1031.3px;top:738.39px;font-size:10.3px;color:#444;font-weight:normal;">Ativo</div>
<svg style="position:absolute;left:1073px;top:734.34px" width="15" height="15" viewBox="0 0 15 15"><rect x="0.6" y="0.6" width="10.8" height="12.8" fill="#fff" stroke="#cfcfcf" stroke-width="1"/><path d="M2.2 11.6 L3.2 8.6 L10.6 1.2 L12.6 3.2 L5.2 10.6 Z" fill="#f9d648" stroke="#dca32a" stroke-width="0.8"/><path d="M2.2 11.6 L3.2 8.6 L5.2 10.6 Z" fill="#a8582c"/></svg>
<svg style="position:absolute;left:1093.2px;top:734.34px" width="13" height="15" viewBox="0 0 13 15"><rect x="1" y="0.5" width="11.2" height="12.9" fill="#fff" stroke="#c3cdd6" stroke-width="0.9"/><rect x="0.2" y="0.2" width="2.4" height="13.4" fill="#d9773c"/><path d="M3.8 11.6 C3.6 7.4 12.2 7.4 12 11.6 Z" fill="#4f5358"/><circle cx="8" cy="5.4" r="2.5" fill="#efc39a"/><path d="M5.3 5.3 C5 1.9 11 1.9 10.7 5.3 C10 4 6 4 5.3 5.3 Z" fill="#9c4418"/></svg>
<svg style="position:absolute;left:1111px;top:735.84px" width="15" height="12" viewBox="0 0 15 12"><path d="M0.6 0.6 L4.8 0.6 L6 1.9 L11.8 1.9 L11.8 10.8 L0.6 10.8 Z" fill="#fdf2c8" stroke="#e0a850" stroke-width="1"/><path d="M2.8 4.6 L14.2 4.6 L12 10.8 L0.6 10.8 Z" fill="#fbd96a" stroke="#e0a850" stroke-width="1"/></svg>
<svg style="position:absolute;left:1132px;top:734.34px" width="15" height="15" viewBox="0 0 15 15"><path d="M2.3 6.5 L2.3 2 Q2.3 0.6 3.7 0.6 L9.8 0.6 L11.8 2.8 L11.8 6.5 Z" fill="#cde6f6" stroke="#6f9cbf" stroke-width="0.9"/><rect x="0.5" y="5.6" width="13" height="6.8" rx="1.6" fill="#c9cdd0" stroke="#5d6368" stroke-width="0.9"/><rect x="3" y="7.3" width="8" height="2.2" fill="#eef0f2"/><rect x="2.8" y="11.2" width="8.4" height="2.4" rx="0.6" fill="#dcecf7" stroke="#7aa2c2" stroke-width="0.8"/></svg>
<svg style="position:absolute;left:1153.5px;top:734.54px" width="10" height="15" viewBox="0 0 10 15"><path d="M8.4 4 C8.1 2.6 6.9 2.1 5 2.1 C3 2.1 1.7 3 1.7 4.4 C1.7 6 3.2 6.5 5 7 C6.9 7.5 8.4 8 8.4 9.8 C8.4 11.3 7 12.2 5 12.2 C3 12.2 1.7 11.5 1.4 10" fill="none" stroke="#63c283" stroke-width="2.5"/><path d="M5 0.2 L5 2.6 M5 11.8 L5 14.2" stroke="#63c283" stroke-width="2.2"/></svg>
<div style="position:absolute;left:280.3px;top:766.12px;width:9.6px;height:9.6px;border:1.2px solid #8c8c8c;border-radius:2px;background:#fff"></div>
<div style="position:absolute;left:305.20px;top:762.82px;width:13.2px;height:13.6px;border:1px solid #d4d4d4;border-radius:3px;background:#fff;text-align:center;font-size:11.25px;line-height:12.6px;font-weight:bold;color:#1a1a1a">Q</div>
<div style="position:absolute;left:314.40px;top:773.62px;width:8.8px;height:8.8px;border-radius:50%;background:#ff1ee8"></div>
<div style="position:absolute;left:324.10px;top:762.82px;width:13.2px;height:13.6px;border:1px solid #d4d4d4;border-radius:3px;background:#fff;text-align:center;font-size:11.25px;line-height:12.6px;font-weight:bold;color:#1a1a1a">A</div>
<div style="position:absolute;left:333.30px;top:773.62px;width:8.8px;height:8.8px;border-radius:50%;background:#1ee01e"></div>
<div style="position:absolute;left:343.00px;top:762.82px;width:13.2px;height:13.6px;border:1px solid #d4d4d4;border-radius:3px;background:#fff;text-align:center;font-size:11.25px;line-height:12.6px;font-weight:bold;color:#1a1a1a">4</div>
<div style="position:absolute;left:361.90px;top:762.82px;width:13.2px;height:13.6px;border:1px solid #b4b4b4;border-radius:3px;background:#fff;text-align:center;font-size:11.25px;line-height:12.6px;font-weight:bold;color:#1a1a1a">M</div>
<div style="position:absolute;left:380.80px;top:762.82px;width:13.2px;height:13.6px;border:1px solid #e2e2e2;border-radius:3px;background:#fff;text-align:center;font-size:11.25px;line-height:12.6px;font-weight:bold;color:#aaa">$</div>
<div class="t" style="left:410.6px;top:767.87px;font-size:10.3px;color:#444;font-weight:normal;">Marcio Pelegrini</div>
<svg style="position:absolute;left:561.00px;top:765.72px" width="11" height="11" viewBox="0 0 11 11"><path d="M5.5 0.6 A4.8 4.8 0 1 1 2.9 9.6 L0.7 10.3 L1.4 8.2 A4.8 4.8 0 0 1 5.5 0.6 Z" fill="#2fcf8e"/><path d="M3.6 3.2 C3.4 4.6 5.3 7.2 7.4 7.4 L7.9 6.7 L6.8 6.1 L6.3 6.6 C5.6 6.3 4.8 5.5 4.5 4.8 L5 4.3 L4.4 3.1 Z" fill="#fff"/></svg>
<div class="t" style="left:575px;top:765.06px;font-size:10.3px;color:#555;font-weight:normal;">(44) 3323-3333</div>
<svg style="position:absolute;left:674.60px;top:765.72px" width="11" height="11" viewBox="0 0 11 11"><path d="M5.5 0.6 A4.8 4.8 0 1 1 2.9 9.6 L0.7 10.3 L1.4 8.2 A4.8 4.8 0 0 1 5.5 0.6 Z" fill="#2fcf8e"/><path d="M3.6 3.2 C3.4 4.6 5.3 7.2 7.4 7.4 L7.9 6.7 L6.8 6.1 L6.3 6.6 C5.6 6.3 4.8 5.5 4.5 4.8 L5 4.3 L4.4 3.1 Z" fill="#fff"/></svg>
<div class="t" style="left:688.7px;top:765.06px;font-size:10.3px;color:#555;font-weight:normal;">(44) 99099-8700</div>
<div class="t" style="left:786.5px;top:767.47px;font-size:10.3px;color:#444;font-weight:normal;">suporte@sub100.com.br</div>
<div class="t" style="left:963.7px;top:767.47px;font-size:10.3px;color:#444;font-weight:normal;">04/07/2022</div>
<div class="t" style="left:1031.3px;top:767.47px;font-size:10.3px;color:#444;font-weight:normal;">Ativo</div>
<svg style="position:absolute;left:1073px;top:763.42px" width="15" height="15" viewBox="0 0 15 15"><rect x="0.6" y="0.6" width="10.8" height="12.8" fill="#fff" stroke="#cfcfcf" stroke-width="1"/><path d="M2.2 11.6 L3.2 8.6 L10.6 1.2 L12.6 3.2 L5.2 10.6 Z" fill="#f9d648" stroke="#dca32a" stroke-width="0.8"/><path d="M2.2 11.6 L3.2 8.6 L5.2 10.6 Z" fill="#a8582c"/></svg>
<svg style="position:absolute;left:1093.2px;top:763.42px" width="13" height="15" viewBox="0 0 13 15"><rect x="1" y="0.5" width="11.2" height="12.9" fill="#fff" stroke="#c3cdd6" stroke-width="0.9"/><rect x="0.2" y="0.2" width="2.4" height="13.4" fill="#d9773c"/><path d="M3.8 11.6 C3.6 7.4 12.2 7.4 12 11.6 Z" fill="#4f5358"/><circle cx="8" cy="5.4" r="2.5" fill="#efc39a"/><path d="M5.3 5.3 C5 1.9 11 1.9 10.7 5.3 C10 4 6 4 5.3 5.3 Z" fill="#9c4418"/></svg>
<svg style="position:absolute;left:1111px;top:764.92px" width="15" height="12" viewBox="0 0 15 12"><path d="M0.6 0.6 L4.8 0.6 L6 1.9 L11.8 1.9 L11.8 10.8 L0.6 10.8 Z" fill="#fdf2c8" stroke="#e0a850" stroke-width="1"/><path d="M2.8 4.6 L14.2 4.6 L12 10.8 L0.6 10.8 Z" fill="#fbd96a" stroke="#e0a850" stroke-width="1"/></svg>
<svg style="position:absolute;left:1132px;top:763.42px" width="15" height="15" viewBox="0 0 15 15"><path d="M2.3 6.5 L2.3 2 Q2.3 0.6 3.7 0.6 L9.8 0.6 L11.8 2.8 L11.8 6.5 Z" fill="#cde6f6" stroke="#6f9cbf" stroke-width="0.9"/><rect x="0.5" y="5.6" width="13" height="6.8" rx="1.6" fill="#c9cdd0" stroke="#5d6368" stroke-width="0.9"/><rect x="3" y="7.3" width="8" height="2.2" fill="#eef0f2"/><rect x="2.8" y="11.2" width="8.4" height="2.4" rx="0.6" fill="#dcecf7" stroke="#7aa2c2" stroke-width="0.8"/></svg>
<svg style="position:absolute;left:1153.5px;top:763.62px" width="10" height="15" viewBox="0 0 10 15"><path d="M8.4 4 C8.1 2.6 6.9 2.1 5 2.1 C3 2.1 1.7 3 1.7 4.4 C1.7 6 3.2 6.5 5 7 C6.9 7.5 8.4 8 8.4 9.8 C8.4 11.3 7 12.2 5 12.2 C3 12.2 1.7 11.5 1.4 10" fill="none" stroke="#63c283" stroke-width="2.5"/><path d="M5 0.2 L5 2.6 M5 11.8 L5 14.2" stroke="#63c283" stroke-width="2.2"/></svg>
<div style="position:absolute;left:280.3px;top:795.20px;width:9.6px;height:9.6px;border:1.2px solid #8c8c8c;border-radius:2px;background:#fff"></div>
<div style="position:absolute;left:305.20px;top:791.90px;width:13.2px;height:13.6px;border:1px solid #d4d4d4;border-radius:3px;background:#fff;text-align:center;font-size:11.25px;line-height:12.6px;font-weight:bold;color:#1a1a1a">Q</div>
<div style="position:absolute;left:314.40px;top:802.70px;width:8.8px;height:8.8px;border-radius:50%;background:#ff1ee8"></div>
<div style="position:absolute;left:324.10px;top:791.90px;width:13.2px;height:13.6px;border:1px solid #d4d4d4;border-radius:3px;background:#fff;text-align:center;font-size:11.25px;line-height:12.6px;font-weight:bold;color:#1a1a1a">M</div>
<div style="position:absolute;left:333.30px;top:802.70px;width:8.8px;height:8.8px;border-radius:50%;background:#ffd000"></div>
<div style="position:absolute;left:343.00px;top:791.90px;width:13.2px;height:13.6px;border:1px solid #e2e2e2;border-radius:3px;background:#fff;text-align:center;font-size:11.25px;line-height:12.6px;font-weight:bold;color:#aaa">N</div>
<div style="position:absolute;left:361.90px;top:791.90px;width:13.2px;height:13.6px;border:1px solid #b4b4b4;border-radius:3px;background:#fff;text-align:center;font-size:11.25px;line-height:12.6px;font-weight:bold;color:#1a1a1a">M</div>
<div style="position:absolute;left:380.80px;top:791.90px;width:13.2px;height:13.6px;border:1px solid #e2e2e2;border-radius:3px;background:#fff;text-align:center;font-size:11.25px;line-height:12.6px;font-weight:bold;color:#aaa">$</div>
<div class="t" style="left:410.6px;top:796.95px;font-size:10.3px;color:#444;font-weight:normal;">Leandro Barroso</div>
<svg style="position:absolute;left:561.00px;top:794.80px" width="11" height="11" viewBox="0 0 11 11"><path d="M5.5 0.6 A4.8 4.8 0 1 1 2.9 9.6 L0.7 10.3 L1.4 8.2 A4.8 4.8 0 0 1 5.5 0.6 Z" fill="#2fcf8e"/><path d="M3.6 3.2 C3.4 4.6 5.3 7.2 7.4 7.4 L7.9 6.7 L6.8 6.1 L6.3 6.6 C5.6 6.3 4.8 5.5 4.5 4.8 L5 4.3 L4.4 3.1 Z" fill="#fff"/></svg>
<div class="t" style="left:575px;top:794.14px;font-size:10.3px;color:#555;font-weight:normal;">(44) 3227-0000</div>
<svg style="position:absolute;left:674.60px;top:794.80px" width="11" height="11" viewBox="0 0 11 11"><path d="M5.5 0.6 A4.8 4.8 0 1 1 2.9 9.6 L0.7 10.3 L1.4 8.2 A4.8 4.8 0 0 1 5.5 0.6 Z" fill="#2fcf8e"/><path d="M3.6 3.2 C3.4 4.6 5.3 7.2 7.4 7.4 L7.9 6.7 L6.8 6.1 L6.3 6.6 C5.6 6.3 4.8 5.5 4.5 4.8 L5 4.3 L4.4 3.1 Z" fill="#fff"/></svg>
<div class="t" style="left:688.7px;top:794.14px;font-size:10.3px;color:#555;font-weight:normal;">(44) 98173-0000</div>
<div class="t" style="left:786.5px;top:796.55px;font-size:10.3px;color:#444;font-weight:normal;">leandro@sub100.com.br</div>
<div class="t" style="left:963.7px;top:796.55px;font-size:10.3px;color:#444;font-weight:normal;">29/06/2022</div>
<div class="t" style="left:1031.3px;top:796.55px;font-size:10.3px;color:#444;font-weight:normal;">Ativo</div>
<svg style="position:absolute;left:1073px;top:792.50px" width="15" height="15" viewBox="0 0 15 15"><rect x="0.6" y="0.6" width="10.8" height="12.8" fill="#fff" stroke="#cfcfcf" stroke-width="1"/><path d="M2.2 11.6 L3.2 8.6 L10.6 1.2 L12.6 3.2 L5.2 10.6 Z" fill="#f9d648" stroke="#dca32a" stroke-width="0.8"/><path d="M2.2 11.6 L3.2 8.6 L5.2 10.6 Z" fill="#a8582c"/></svg>
<svg style="position:absolute;left:1093.2px;top:792.50px" width="13" height="15" viewBox="0 0 13 15"><rect x="1" y="0.5" width="11.2" height="12.9" fill="#fff" stroke="#c3cdd6" stroke-width="0.9"/><rect x="0.2" y="0.2" width="2.4" height="13.4" fill="#d9773c"/><path d="M3.8 11.6 C3.6 7.4 12.2 7.4 12 11.6 Z" fill="#4f5358"/><circle cx="8" cy="5.4" r="2.5" fill="#efc39a"/><path d="M5.3 5.3 C5 1.9 11 1.9 10.7 5.3 C10 4 6 4 5.3 5.3 Z" fill="#9c4418"/></svg>
<svg style="position:absolute;left:1111px;top:794.00px" width="15" height="12" viewBox="0 0 15 12"><path d="M0.6 0.6 L4.8 0.6 L6 1.9 L11.8 1.9 L11.8 10.8 L0.6 10.8 Z" fill="#fdf2c8" stroke="#e0a850" stroke-width="1"/><path d="M2.8 4.6 L14.2 4.6 L12 10.8 L0.6 10.8 Z" fill="#fbd96a" stroke="#e0a850" stroke-width="1"/></svg>
<svg style="position:absolute;left:1132px;top:792.50px" width="15" height="15" viewBox="0 0 15 15"><path d="M2.3 6.5 L2.3 2 Q2.3 0.6 3.7 0.6 L9.8 0.6 L11.8 2.8 L11.8 6.5 Z" fill="#cde6f6" stroke="#6f9cbf" stroke-width="0.9"/><rect x="0.5" y="5.6" width="13" height="6.8" rx="1.6" fill="#c9cdd0" stroke="#5d6368" stroke-width="0.9"/><rect x="3" y="7.3" width="8" height="2.2" fill="#eef0f2"/><rect x="2.8" y="11.2" width="8.4" height="2.4" rx="0.6" fill="#dcecf7" stroke="#7aa2c2" stroke-width="0.8"/></svg>
<svg style="position:absolute;left:1153.5px;top:792.70px" width="10" height="15" viewBox="0 0 10 15"><path d="M8.4 4 C8.1 2.6 6.9 2.1 5 2.1 C3 2.1 1.7 3 1.7 4.4 C1.7 6 3.2 6.5 5 7 C6.9 7.5 8.4 8 8.4 9.8 C8.4 11.3 7 12.2 5 12.2 C3 12.2 1.7 11.5 1.4 10" fill="none" stroke="#63c283" stroke-width="2.5"/><path d="M5 0.2 L5 2.6 M5 11.8 L5 14.2" stroke="#63c283" stroke-width="2.2"/></svg>
<div style="position:absolute;left:280.3px;top:824.28px;width:9.6px;height:9.6px;border:1.2px solid #8c8c8c;border-radius:2px;background:#fff"></div>
<div style="position:absolute;left:305.20px;top:820.98px;width:13.2px;height:13.6px;border:1px solid #d4d4d4;border-radius:3px;background:#fff;text-align:center;font-size:11.25px;line-height:12.6px;font-weight:bold;color:#e8141a">Q</div>
<div style="position:absolute;left:324.10px;top:820.98px;width:13.2px;height:13.6px;border:1px solid #d4d4d4;border-radius:3px;background:#fff;text-align:center;font-size:11.25px;line-height:12.6px;font-weight:bold;color:#e8141a">A</div>
<div style="position:absolute;left:343.00px;top:820.98px;width:13.2px;height:13.6px;border:1px solid #d4d4d4;border-radius:3px;background:#fff;text-align:center;font-size:11.25px;line-height:12.6px;font-weight:bold;color:#e8141a">1</div>
<div style="position:absolute;left:361.90px;top:820.98px;width:13.2px;height:13.6px;border:1px solid #b4b4b4;border-radius:3px;background:#fff;text-align:center;font-size:11.25px;line-height:12.6px;font-weight:bold;color:#e8141a">M</div>
<div style="position:absolute;left:380.80px;top:820.98px;width:13.2px;height:13.6px;border:1px solid #e2e2e2;border-radius:3px;background:#fff;text-align:center;font-size:11.25px;line-height:12.6px;font-weight:bold;color:#f08a8a">$</div>
<div class="t" style="left:410.6px;top:826.03px;font-size:10.3px;color:#f01c1c;font-weight:normal;">Mario da Silva</div>
<svg style="position:absolute;left:561.00px;top:823.88px" width="11" height="11" viewBox="0 0 11 11"><path d="M5.5 0.6 A4.8 4.8 0 1 1 2.9 9.6 L0.7 10.3 L1.4 8.2 A4.8 4.8 0 0 1 5.5 0.6 Z" fill="#2fcf8e"/><path d="M3.6 3.2 C3.4 4.6 5.3 7.2 7.4 7.4 L7.9 6.7 L6.8 6.1 L6.3 6.6 C5.6 6.3 4.8 5.5 4.5 4.8 L5 4.3 L4.4 3.1 Z" fill="#fff"/></svg>
<div class="t" style="left:575px;top:823.23px;font-size:10.3px;color:#f01c1c;font-weight:normal;">(41) 3232-0000</div>
<svg style="position:absolute;left:674.60px;top:823.88px" width="11" height="11" viewBox="0 0 11 11"><path d="M5.5 0.6 A4.8 4.8 0 1 1 2.9 9.6 L0.7 10.3 L1.4 8.2 A4.8 4.8 0 0 1 5.5 0.6 Z" fill="#2fcf8e"/><path d="M3.6 3.2 C3.4 4.6 5.3 7.2 7.4 7.4 L7.9 6.7 L6.8 6.1 L6.3 6.6 C5.6 6.3 4.8 5.5 4.5 4.8 L5 4.3 L4.4 3.1 Z" fill="#fff"/></svg>
<div class="t" style="left:688.7px;top:823.23px;font-size:10.3px;color:#f01c1c;font-weight:normal;">(41) 98808-0000</div>
<div class="t" style="left:786.5px;top:825.63px;font-size:10.3px;color:#f01c1c;font-weight:normal;">mario@sub00.com.br</div>
<div class="t" style="left:963.7px;top:825.63px;font-size:10.3px;color:#f01c1c;font-weight:normal;">30/05/2017</div>
<div class="t" style="left:1031.3px;top:825.63px;font-size:10.3px;color:#f01c1c;font-weight:normal;">Ativo</div>
<svg style="position:absolute;left:1073px;top:821.58px" width="15" height="15" viewBox="0 0 15 15"><rect x="0.6" y="0.6" width="10.8" height="12.8" fill="#fff" stroke="#cfcfcf" stroke-width="1"/><path d="M2.2 11.6 L3.2 8.6 L10.6 1.2 L12.6 3.2 L5.2 10.6 Z" fill="#f9d648" stroke="#dca32a" stroke-width="0.8"/><path d="M2.2 11.6 L3.2 8.6 L5.2 10.6 Z" fill="#a8582c"/></svg>
<svg style="position:absolute;left:1093.2px;top:821.58px" width="13" height="15" viewBox="0 0 13 15"><rect x="1" y="0.5" width="11.2" height="12.9" fill="#fff" stroke="#c3cdd6" stroke-width="0.9"/><rect x="0.2" y="0.2" width="2.4" height="13.4" fill="#d9773c"/><path d="M3.8 11.6 C3.6 7.4 12.2 7.4 12 11.6 Z" fill="#4f5358"/><circle cx="8" cy="5.4" r="2.5" fill="#efc39a"/><path d="M5.3 5.3 C5 1.9 11 1.9 10.7 5.3 C10 4 6 4 5.3 5.3 Z" fill="#9c4418"/></svg>
<svg style="position:absolute;left:1111px;top:823.08px" width="15" height="12" viewBox="0 0 15 12"><path d="M0.6 0.6 L4.8 0.6 L6 1.9 L11.8 1.9 L11.8 10.8 L0.6 10.8 Z" fill="#fdf2c8" stroke="#e0a850" stroke-width="1"/><path d="M2.8 4.6 L14.2 4.6 L12 10.8 L0.6 10.8 Z" fill="#fbd96a" stroke="#e0a850" stroke-width="1"/></svg>
<svg style="position:absolute;left:1132px;top:821.58px" width="15" height="15" viewBox="0 0 15 15"><path d="M2.3 6.5 L2.3 2 Q2.3 0.6 3.7 0.6 L9.8 0.6 L11.8 2.8 L11.8 6.5 Z" fill="#cde6f6" stroke="#6f9cbf" stroke-width="0.9"/><rect x="0.5" y="5.6" width="13" height="6.8" rx="1.6" fill="#c9cdd0" stroke="#5d6368" stroke-width="0.9"/><rect x="3" y="7.3" width="8" height="2.2" fill="#eef0f2"/><rect x="2.8" y="11.2" width="8.4" height="2.4" rx="0.6" fill="#dcecf7" stroke="#7aa2c2" stroke-width="0.8"/></svg>
<svg style="position:absolute;left:1153.5px;top:821.78px" width="10" height="15" viewBox="0 0 10 15"><path d="M8.4 4 C8.1 2.6 6.9 2.1 5 2.1 C3 2.1 1.7 3 1.7 4.4 C1.7 6 3.2 6.5 5 7 C6.9 7.5 8.4 8 8.4 9.8 C8.4 11.3 7 12.2 5 12.2 C3 12.2 1.7 11.5 1.4 10" fill="none" stroke="#63c283" stroke-width="2.5"/><path d="M5 0.2 L5 2.6 M5 11.8 L5 14.2" stroke="#63c283" stroke-width="2.2"/></svg>
</body></html>
